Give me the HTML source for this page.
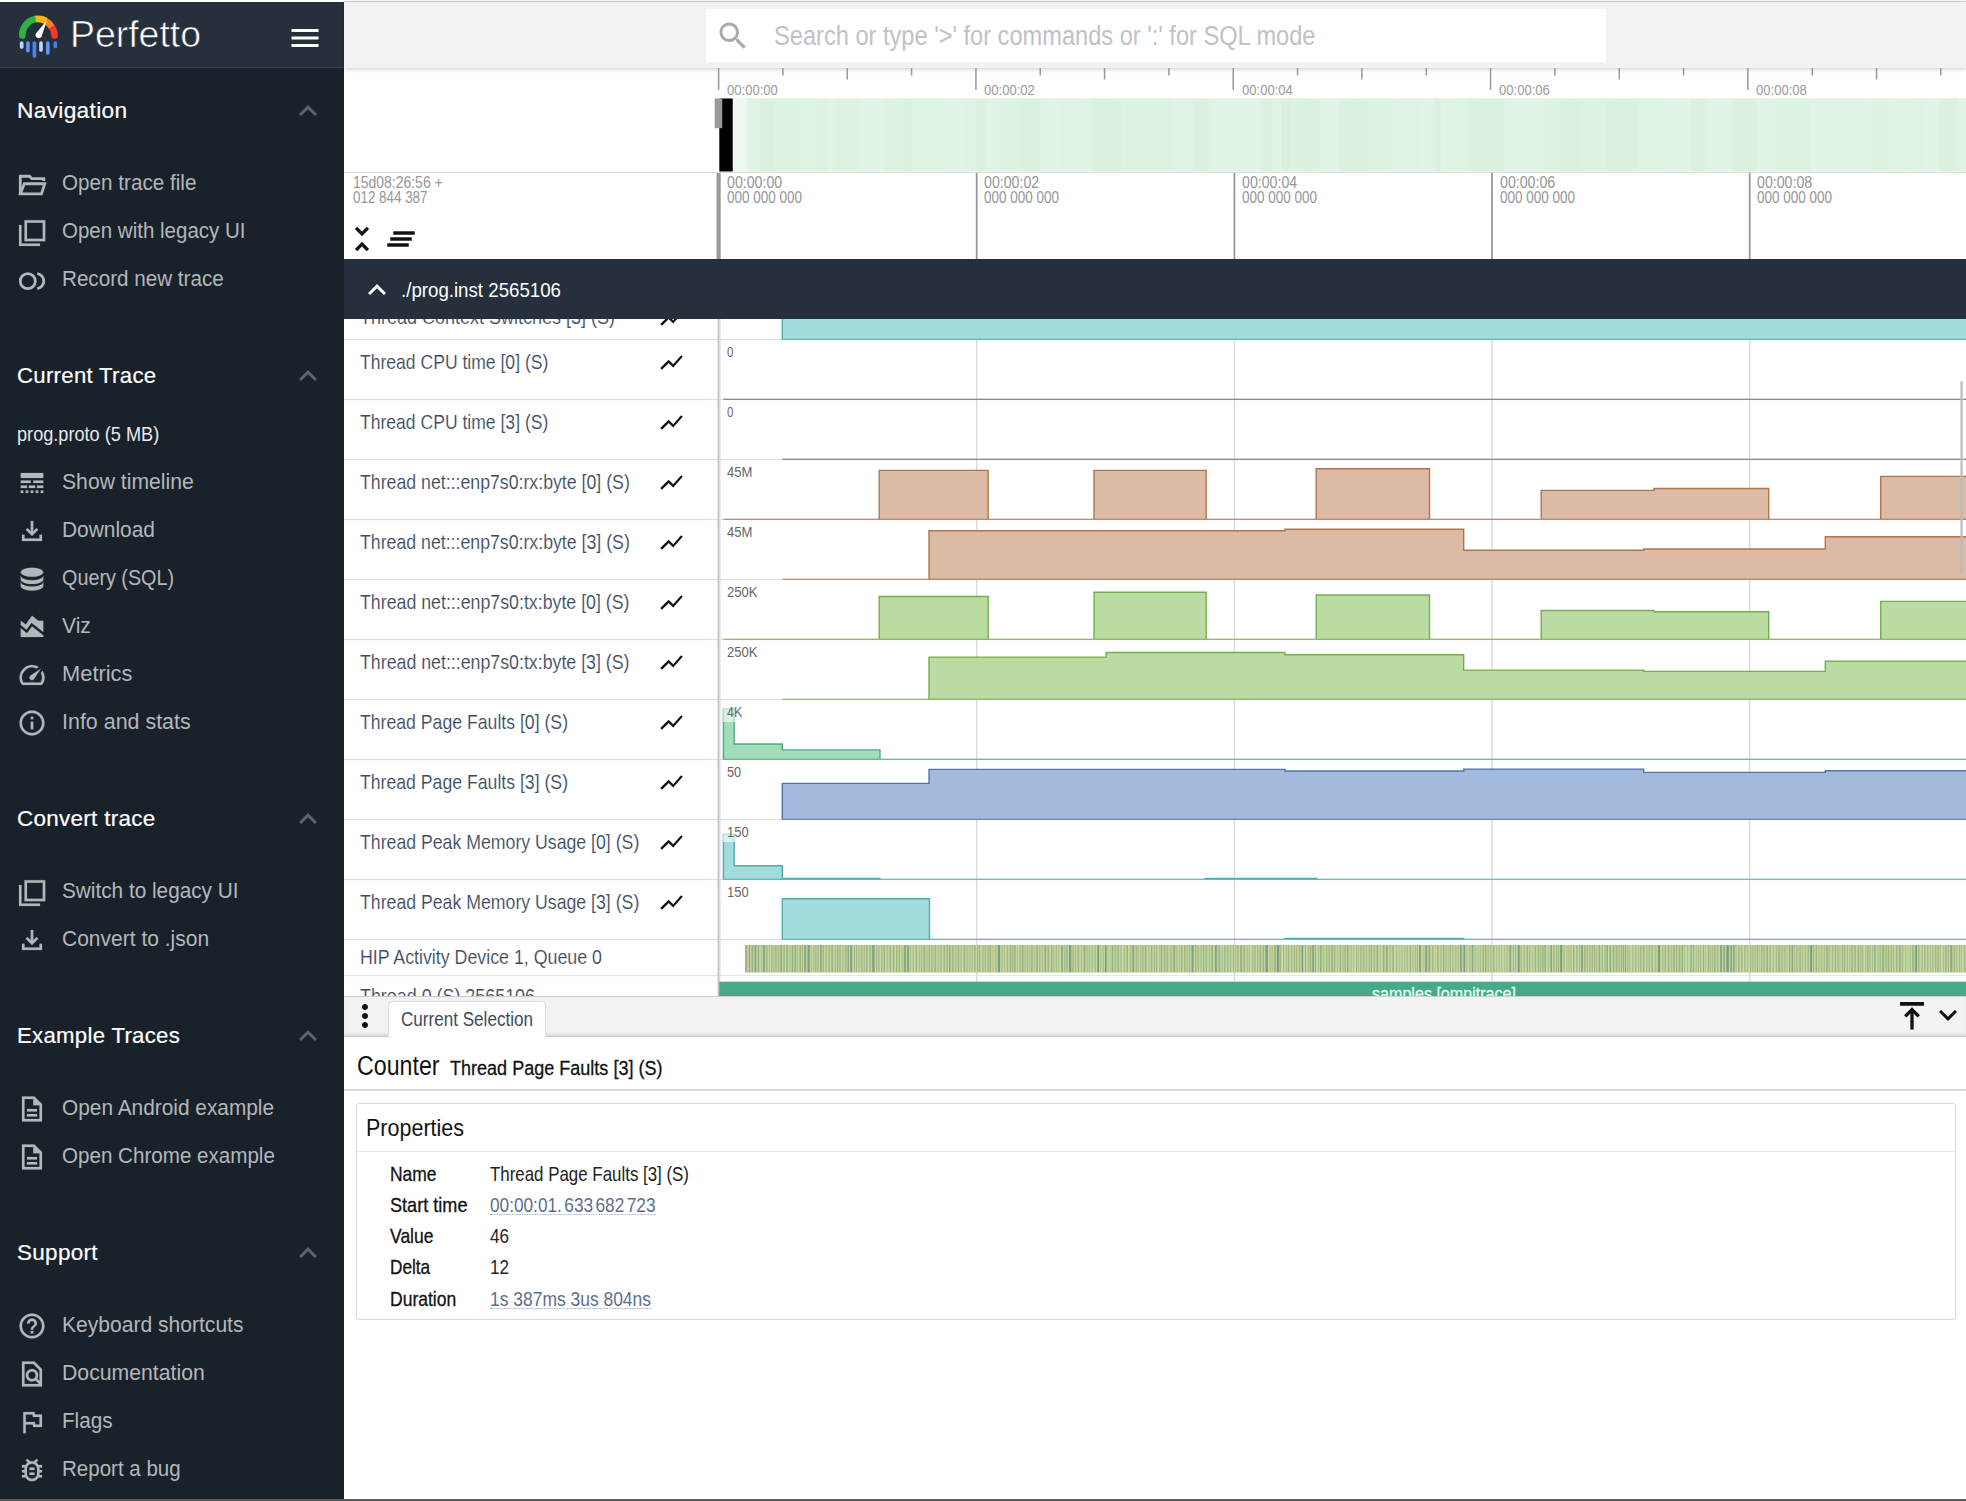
<!DOCTYPE html><html><head><meta charset="utf-8"><title>Perfetto UI</title><style>

html,body{margin:0;padding:0;background:#fff}
body{width:1966px;height:1501px;overflow:hidden;position:relative;font-family:"Liberation Sans",sans-serif}
.abs{position:absolute}
.t{position:absolute;white-space:nowrap;transform-origin:0 0;display:block}
.clip{position:absolute;overflow:hidden}

</style></head><body>
<div class="abs" style="left:0;top:0;width:1966px;height:2px;background:#fdfdfd"></div>
<div class="abs" style="left:0;top:2px;width:344px;height:1499px;background:#19212b"></div>
<div class="abs" style="left:0;top:2px;width:344px;height:65px;background:#262f3c"></div>
<div class="abs" style="left:0;top:67px;width:344px;height:1px;background:#3b4450"></div>
<svg class="abs" style="left:10px;top:8px" width="60" height="56" viewBox="10 8 60 56">
<g fill="none" stroke-width="6.6">
<path d="M22.3 35.5 A16.2 16.2 0 0 1 35.6 19.1" stroke="#2fb344" stroke-linecap="round"/>
<path d="M50.6 25.4 A16.2 16.2 0 0 1 54.7 35.5" stroke="#f0392b" stroke-linecap="round"/>
<path d="M44.8 20.4 A16.2 16.2 0 0 1 51.6 26.8" stroke="#f5821f"/>
<path d="M35.6 19.1 A16.2 16.2 0 0 1 46 20.9" stroke="#fbb514"/>
</g>
<path d="M46.9 20.3 L41.6 36.6 A3.3 3.3 0 0 1 35.6 34.1 Z" fill="#fff"/>
<g stroke-width="3.7" stroke-linecap="round">
<path d="M21.7 43v4" stroke="#bcd4fa"/>
<path d="M27.9 43v7.6" stroke="#5e97f1"/>
<path d="M34.4 43v13" stroke="#4285f4"/>
<path d="M41 43v7" stroke="#bcd4fa"/>
<path d="M47.8 43v10" stroke="#5e97f1"/>
<path d="M55.3 43v3.4" stroke="#3f7fe6"/>
</g></svg>
<span class="t" id="t0" style="left:69.6px;top:12.8px;font-size:36px;line-height:43.20px;color:#fff;-webkit-text-stroke:0.6px #262f3c;transform:scaleX(1.0390);">Perfetto</span>
<svg class="abs" style="left:286.5px;top:20.0px;color:#fff" width="36" height="36" viewBox="0 0 24 24" fill="#fff"><path d="M3 18h18v-2H3v2zm0-5h18v-2H3v2zm0-7v2h18V6H3z" /></svg>
<span class="t" id="t1" style="left:16.6px;top:97.2px;font-size:22.5px;line-height:27.00px;color:#fff;-webkit-text-stroke:0.2px #fff;transform:scaleX(1.0098);letter-spacing:0.3px;">Navigation</span>
<svg class="abs" style="left:290.0px;top:93.0px;color:#5e646b" width="36" height="36" viewBox="0 0 24 24" fill="#5e646b"><path d="M12 8l-6 6 1.41 1.41L12 10.83l4.59 4.58L18 14z" /></svg>
<svg class="abs" style="left:17.0px;top:168.9px;color:#b4b7ba" width="30" height="30" viewBox="0 0 24 24" fill="#b4b7ba" stroke="#b4b7ba" stroke-width="0.15"><path d="M21.4 9.6V7.7H11.9L10 5.8H2.64V19.9" fill="none" stroke="currentColor" stroke-width="2.25"/><path d="M2.64 19.9L5.9 11.8H22.2L19.6 19.9z" fill="none" stroke="currentColor" stroke-width="2.25"/></svg>
<span class="t" id="t2" style="left:61.8px;top:170.5px;font-size:21.5px;line-height:25.80px;color:#b4b7ba;transform:scaleX(0.9612);">Open trace file</span>
<svg class="abs" style="left:17.0px;top:216.9px;color:#b4b7ba" width="30" height="30" viewBox="0 0 24 24" fill="#b4b7ba" stroke="#b4b7ba" stroke-width="0.15"><path d="M1.6 6.3v16.8h16.8v-2H3.6V6.3zM6 2.5v16.8h16.6V2.5zm2 2h12.6v12.8H8z" fill-rule="evenodd"/></svg>
<span class="t" id="t3" style="left:61.8px;top:218.5px;font-size:21.5px;line-height:25.80px;color:#b4b7ba;transform:scaleX(0.9537);">Open with legacy UI</span>
<svg class="abs" style="left:17.0px;top:264.9px;color:#b4b7ba" width="30" height="30" viewBox="0 0 24 24" fill="#b4b7ba" stroke="#b4b7ba" stroke-width="0.15"><circle cx="8.64" cy="12.9" r="6" fill="none" stroke="currentColor" stroke-width="2.25"/><path d="M16.2 6.95A6 6 0 0 1 16.2 18.85" fill="none" stroke="currentColor" stroke-width="2.25"/></svg>
<span class="t" id="t4" style="left:61.8px;top:266.5px;font-size:21.5px;line-height:25.80px;color:#b4b7ba;transform:scaleX(0.9596);">Record new trace</span>
<span class="t" id="t5" style="left:16.6px;top:362.2px;font-size:22.5px;line-height:27.00px;color:#fff;-webkit-text-stroke:0.2px #fff;transform:scaleX(0.9855);letter-spacing:0.3px;">Current Trace</span>
<svg class="abs" style="left:290.0px;top:358.0px;color:#5e646b" width="36" height="36" viewBox="0 0 24 24" fill="#5e646b"><path d="M12 8l-6 6 1.41 1.41L12 10.83l4.59 4.58L18 14z" /></svg>
<span class="t" id="t6" style="left:17.4px;top:420.9px;font-size:21px;line-height:25.20px;color:#e8e9ea;transform:scaleX(0.8640);">prog.proto (5 MB)</span>
<svg class="abs" style="left:17.0px;top:467.9px;color:#b4b7ba" width="30" height="30" viewBox="0 0 24 24" fill="#b4b7ba" stroke="#b4b7ba" stroke-width="0.15"><path d="M3 16h5v-2H3v2zm6.5 0h5v-2h-5v2zm6.5 0h5v-2h-5v2zM3 20h2v-2H3v2zm4 0h2v-2H7v2zm4 0h2v-2h-2v2zm4 0h2v-2h-2v2zm4 0h2v-2h-2v2zM3 12h8v-2H3v2zm10 0h8v-2h-8v2zM3 4v4h18V4H3z" /></svg>
<span class="t" id="t7" style="left:61.8px;top:469.5px;font-size:21.5px;line-height:25.80px;color:#b4b7ba;transform:scaleX(0.9840);">Show timeline</span>
<svg class="abs" style="left:17.0px;top:515.9px;color:#b4b7ba" width="30" height="30" viewBox="0 0 24 24" fill="#b4b7ba" stroke="#b4b7ba" stroke-width="0.15"><path d="M18 15v3H6v-3H4v5h16v-5h-2zm-1-4-1.41-1.41L13 12.17V4h-2v8.17L8.41 9.59 7 11l5 5 5-5z" /></svg>
<span class="t" id="t8" style="left:61.8px;top:517.5px;font-size:21.5px;line-height:25.80px;color:#b4b7ba;transform:scaleX(0.9715);">Download</span>
<svg class="abs" style="left:17.0px;top:563.9px;color:#b4b7ba" width="30" height="30" viewBox="0 0 24 24" fill="#b4b7ba" stroke="#b4b7ba" stroke-width="0.15"><ellipse cx="12" cy="6.6" rx="9" ry="3.6"/><path d="M3 9.3c0 2 4 3.6 9 3.6s9-1.6 9-3.6v3.1c0 2-4 3.6-9 3.6s-9-1.6-9-3.6z" /><path d="M3 14.4c0 2 4 3.6 9 3.6s9-1.6 9-3.6v3.1c0 2-4 3.6-9 3.6s-9-1.6-9-3.6z" /></svg>
<span class="t" id="t9" style="left:61.8px;top:565.5px;font-size:21.5px;line-height:25.80px;color:#b4b7ba;transform:scaleX(0.9198);">Query (SQL)</span>
<svg class="abs" style="left:17.0px;top:611.9px;color:#b4b7ba" width="30" height="30" viewBox="0 0 24 24" fill="#b4b7ba" stroke="#b4b7ba" stroke-width="0.15"><path d="M3 13v7h18v-1.5l-9-7L8 17l-5-4zm0-6 4 3 5-7 5 4h4v8.97l-9.4-7.31-3.98 5.48L3 10.44V7z" /></svg>
<span class="t" id="t10" style="left:61.8px;top:613.5px;font-size:21.5px;line-height:25.80px;color:#b4b7ba;transform:scaleX(0.9802);">Viz</span>
<svg class="abs" style="left:17.0px;top:659.9px;color:#b4b7ba" width="30" height="30" viewBox="0 0 24 24" fill="#b4b7ba" stroke="#b4b7ba" stroke-width="0.15"><path d="M20.38 8.57l-1.23 1.85a8 8 0 0 1-.22 7.58H5.07A8 8 0 0 1 15.58 6.85l1.85-1.23A10 10 0 0 0 3.35 19a2 2 0 0 0 1.72 1h13.85a2 2 0 0 0 1.74-1 10 10 0 0 0-.27-10.44zm-9.79 6.84a2 2 0 0 0 2.83 0l5.66-8.49-8.49 5.66a2 2 0 0 0 0 2.83z" /></svg>
<span class="t" id="t11" style="left:61.8px;top:661.5px;font-size:21.5px;line-height:25.80px;color:#b4b7ba;transform:scaleX(1.0176);">Metrics</span>
<svg class="abs" style="left:17.0px;top:707.9px;color:#b4b7ba" width="30" height="30" viewBox="0 0 24 24" fill="#b4b7ba" stroke="#b4b7ba" stroke-width="0.15"><path d="M11 7h2v2h-2zm0 4h2v6h-2zm1-9C6.48 2 2 6.48 2 12s4.48 10 10 10 10-4.48 10-10S17.52 2 12 2zm0 18c-4.41 0-8-3.59-8-8s3.59-8 8-8 8 3.59 8 8-3.59 8-8 8z" /></svg>
<span class="t" id="t12" style="left:61.8px;top:709.5px;font-size:21.5px;line-height:25.80px;color:#b4b7ba;transform:scaleX(0.9969);">Info and stats</span>
<span class="t" id="t13" style="left:16.6px;top:804.7px;font-size:22.5px;line-height:27.00px;color:#fff;-webkit-text-stroke:0.2px #fff;transform:scaleX(0.9966);letter-spacing:0.3px;">Convert trace</span>
<svg class="abs" style="left:290.0px;top:800.5px;color:#5e646b" width="36" height="36" viewBox="0 0 24 24" fill="#5e646b"><path d="M12 8l-6 6 1.41 1.41L12 10.83l4.59 4.58L18 14z" /></svg>
<svg class="abs" style="left:17.0px;top:876.9px;color:#b4b7ba" width="30" height="30" viewBox="0 0 24 24" fill="#b4b7ba" stroke="#b4b7ba" stroke-width="0.15"><path d="M1.6 6.3v16.8h16.8v-2H3.6V6.3zM6 2.5v16.8h16.6V2.5zm2 2h12.6v12.8H8z" fill-rule="evenodd"/></svg>
<span class="t" id="t14" style="left:61.8px;top:878.5px;font-size:21.5px;line-height:25.80px;color:#b4b7ba;transform:scaleX(0.9654);">Switch to legacy UI</span>
<svg class="abs" style="left:17.0px;top:924.9px;color:#b4b7ba" width="30" height="30" viewBox="0 0 24 24" fill="#b4b7ba" stroke="#b4b7ba" stroke-width="0.15"><path d="M18 15v3H6v-3H4v5h16v-5h-2zm-1-4-1.41-1.41L13 12.17V4h-2v8.17L8.41 9.59 7 11l5 5 5-5z" /></svg>
<span class="t" id="t15" style="left:61.8px;top:926.5px;font-size:21.5px;line-height:25.80px;color:#b4b7ba;transform:scaleX(0.9769);">Convert to .json</span>
<span class="t" id="t16" style="left:16.6px;top:1021.7px;font-size:22.5px;line-height:27.00px;color:#fff;-webkit-text-stroke:0.2px #fff;transform:scaleX(0.9854);letter-spacing:0.3px;">Example Traces</span>
<svg class="abs" style="left:290.0px;top:1017.5px;color:#5e646b" width="36" height="36" viewBox="0 0 24 24" fill="#5e646b"><path d="M12 8l-6 6 1.41 1.41L12 10.83l4.59 4.58L18 14z" /></svg>
<svg class="abs" style="left:17.0px;top:1093.9px;color:#b4b7ba" width="30" height="30" viewBox="0 0 24 24" fill="#b4b7ba" stroke="#b4b7ba" stroke-width="0.15"><path d="M8 16h8v2H8zm0-4h8v2H8zm6-10H4v20h16V8l-6-6zm4 18H6V4h7v5h5v11z" /></svg>
<span class="t" id="t17" style="left:61.8px;top:1095.5px;font-size:21.5px;line-height:25.80px;color:#b4b7ba;transform:scaleX(0.9697);">Open Android example</span>
<svg class="abs" style="left:17.0px;top:1141.9px;color:#b4b7ba" width="30" height="30" viewBox="0 0 24 24" fill="#b4b7ba" stroke="#b4b7ba" stroke-width="0.15"><path d="M8 16h8v2H8zm0-4h8v2H8zm6-10H4v20h16V8l-6-6zm4 18H6V4h7v5h5v11z" /></svg>
<span class="t" id="t18" style="left:61.8px;top:1143.5px;font-size:21.5px;line-height:25.80px;color:#b4b7ba;transform:scaleX(0.9578);">Open Chrome example</span>
<span class="t" id="t19" style="left:16.6px;top:1239.2px;font-size:22.5px;line-height:27.00px;color:#fff;-webkit-text-stroke:0.2px #fff;transform:scaleX(0.9987);letter-spacing:0.3px;">Support</span>
<svg class="abs" style="left:290.0px;top:1235.0px;color:#5e646b" width="36" height="36" viewBox="0 0 24 24" fill="#5e646b"><path d="M12 8l-6 6 1.41 1.41L12 10.83l4.59 4.58L18 14z" /></svg>
<svg class="abs" style="left:17.0px;top:1310.9px;color:#b4b7ba" width="30" height="30" viewBox="0 0 24 24" fill="#b4b7ba" stroke="#b4b7ba" stroke-width="0.15"><path d="M11 18h2v-2h-2v2zm1-16C6.48 2 2 6.48 2 12s4.48 10 10 10 10-4.48 10-10S17.52 2 12 2zm0 18c-4.41 0-8-3.59-8-8s3.59-8 8-8 8 3.59 8 8-3.59 8-8 8zm0-14c-2.21 0-4 1.79-4 4h2c0-1.1.9-2 2-2s2 .9 2 2c0 2-3 1.75-3 5h2c0-2.25 3-2.5 3-5 0-2.21-1.79-4-4-4z" /></svg>
<span class="t" id="t20" style="left:61.8px;top:1312.5px;font-size:21.5px;line-height:25.80px;color:#b4b7ba;transform:scaleX(0.9798);">Keyboard shortcuts</span>
<svg class="abs" style="left:17.0px;top:1358.9px;color:#b4b7ba" width="30" height="30" viewBox="0 0 24 24" fill="#b4b7ba" stroke="#b4b7ba" stroke-width="0.15"><path d="M14 2H4v20h16V8l-6-6zM6 4h7l5 5v8.58l-1.84-1.84c1.28-1.94 1.07-4.57-.64-6.28C14.55 8.49 13.28 8 12 8c-1.28 0-2.55.49-3.53 1.46-1.95 1.95-1.95 5.11 0 7.05.97.97 2.25 1.46 3.53 1.46.96 0 1.92-.28 2.75-.83L17.6 20H6V4zm8.11 11.1c-.56.56-1.31.88-2.11.88s-1.55-.31-2.11-.88c-.56-.56-.88-1.31-.88-2.11s.31-1.55.88-2.11c.56-.57 1.31-.88 2.11-.88s1.55.31 2.11.88c.56.56.88 1.31.88 2.11s-.31 1.55-.88 2.11z" /></svg>
<span class="t" id="t21" style="left:61.8px;top:1360.5px;font-size:21.5px;line-height:25.80px;color:#b4b7ba;transform:scaleX(0.9874);">Documentation</span>
<svg class="abs" style="left:17.0px;top:1406.9px;color:#b4b7ba" width="30" height="30" viewBox="0 0 24 24" fill="#b4b7ba" stroke="#b4b7ba" stroke-width="0.15"><path d="M12.36 6l.4 2H18v6h-3.36l-.4-2H7V6h5.36M14 4H5v17h2v-7h5.6l.4 2h7V6h-5.6L14 4z" /></svg>
<span class="t" id="t22" style="left:61.8px;top:1408.5px;font-size:21.5px;line-height:25.80px;color:#b4b7ba;transform:scaleX(0.9605);">Flags</span>
<svg class="abs" style="left:17.0px;top:1454.9px;color:#b4b7ba" width="30" height="30" viewBox="0 0 24 24" fill="#b4b7ba" stroke="#b4b7ba" stroke-width="0.15"><path d="M20 8h-2.81c-.45-.78-1.07-1.45-1.82-1.96L17 4.41 15.59 3l-2.17 2.17C12.96 5.06 12.49 5 12 5s-.96.06-1.41.17L8.41 3 7 4.41l1.62 1.63C7.88 6.55 7.26 7.22 6.81 8H4v2h2.09c-.05.33-.09.66-.09 1v1H4v2h2v1c0 .34.04.67.09 1H4v2h2.81c1.04 1.79 2.97 3 5.19 3s4.15-1.21 5.19-3H20v-2h-2.09c.05-.33.09-.66.09-1v-1h2v-2h-2v-1c0-.34-.04-.67-.09-1H20V8zm-4 4v3c0 .22-.03.47-.07.7l-.1.65-.37.65c-.72 1.24-2.04 2-3.46 2s-2.74-.77-3.46-2l-.37-.64-.1-.65C8.03 15.48 8 15.23 8 15v-4c0-.23.03-.48.07-.7l.1-.65.37-.65c.3-.52.72-.97 1.21-1.31l.57-.39.74-.18c.31-.08.63-.12.94-.12.32 0 .63.04.95.12l.68.16.61.42c.5.34.91.78 1.21 1.31l.38.65.1.65c.04.22.07.47.07.69v1zm-6 2h4v2h-4zm0-4h4v2h-4z" /></svg>
<span class="t" id="t23" style="left:61.8px;top:1456.5px;font-size:21.5px;line-height:25.80px;color:#b4b7ba;transform:scaleX(0.9549);">Report a bug</span>
<div class="abs" style="left:344px;top:2px;width:1622px;height:66px;background:#f2f2f2;box-shadow:0 1px 4px rgba(0,0,0,0.22)"></div>
<div class="abs" style="left:344px;top:1.1px;width:1622px;height:1.2px;background:#c6c6c6"></div>
<div class="abs" style="left:706px;top:9px;width:900px;height:53px;background:#fff;border-radius:3px"></div>
<svg class="abs" style="left:714.5px;top:17.5px;color:#aaa" width="36" height="36" viewBox="0 0 24 24" fill="#aaa"><path d="M15.5 14h-.79l-.28-.27C15.41 12.59 16 11.11 16 9.5 16 5.91 13.09 3 9.5 3S3 5.91 3 9.5 5.91 16 9.5 16c1.61 0 3.09-.59 4.23-1.57l.27.28v.79l5 4.99L20.49 19l-4.99-5zm-6 0C7.01 14 5 11.99 5 9.5S7.01 5 9.5 5 14 7.01 14 9.5 11.99 14 9.5 14z" /></svg>
<span class="t" id="t24" style="left:774.0px;top:20.3px;font-size:27px;line-height:32.40px;color:#bfc2c5;transform:scaleX(0.8746);">Search or type '&gt;' for commands or ':' for SQL mode</span>
<svg class="abs" style="left:0;top:0" width="1966" height="100"><rect x="717.85" y="68" width="1.5" height="22" fill="#999"/><rect x="782.18" y="68" width="1.5" height="7.5" fill="#999"/><rect x="846.51" y="68" width="1.5" height="11.5" fill="#999"/><rect x="910.84" y="68" width="1.5" height="7.5" fill="#999"/><rect x="975.17" y="68" width="1.5" height="22" fill="#999"/><rect x="1039.50" y="68" width="1.5" height="7.5" fill="#999"/><rect x="1103.83" y="68" width="1.5" height="11.5" fill="#999"/><rect x="1168.16" y="68" width="1.5" height="7.5" fill="#999"/><rect x="1232.49" y="68" width="1.5" height="22" fill="#999"/><rect x="1296.82" y="68" width="1.5" height="7.5" fill="#999"/><rect x="1361.15" y="68" width="1.5" height="11.5" fill="#999"/><rect x="1425.48" y="68" width="1.5" height="7.5" fill="#999"/><rect x="1489.81" y="68" width="1.5" height="22" fill="#999"/><rect x="1554.14" y="68" width="1.5" height="7.5" fill="#999"/><rect x="1618.47" y="68" width="1.5" height="11.5" fill="#999"/><rect x="1682.80" y="68" width="1.5" height="7.5" fill="#999"/><rect x="1747.13" y="68" width="1.5" height="22" fill="#999"/><rect x="1811.46" y="68" width="1.5" height="7.5" fill="#999"/><rect x="1875.79" y="68" width="1.5" height="11.5" fill="#999"/><rect x="1940.12" y="68" width="1.5" height="7.5" fill="#999"/></svg>
<span class="t" id="t25" style="left:727.0px;top:80.9px;font-size:15px;line-height:18.00px;color:#999;transform:scaleX(0.8700);">00:00:00</span>
<span class="t" id="t26" style="left:984.3px;top:80.9px;font-size:15px;line-height:18.00px;color:#999;transform:scaleX(0.8700);">00:00:02</span>
<span class="t" id="t27" style="left:1241.6px;top:80.9px;font-size:15px;line-height:18.00px;color:#999;transform:scaleX(0.8700);">00:00:04</span>
<span class="t" id="t28" style="left:1498.9px;top:80.9px;font-size:15px;line-height:18.00px;color:#999;transform:scaleX(0.8700);">00:00:06</span>
<span class="t" id="t29" style="left:1756.2px;top:80.9px;font-size:15px;line-height:18.00px;color:#999;transform:scaleX(0.8700);">00:00:08</span>
<svg class="abs" style="left:0;top:0" width="1966" height="173"><rect x="733" y="98.5" width="1233" height="73" fill="#dff3e3"/><rect x="733" y="98.5" width="14.5" height="73" fill="#eef8ee"/><rect x="747.5" y="98.5" width="12.5" height="73" fill="#e0f3e4"/><rect x="759.5" y="98.5" width="15.5" height="73" fill="#dbf0df"/><rect x="774.5" y="98.5" width="6.5" height="73" fill="#ddf2e1"/><rect x="780.5" y="98.5" width="20.5" height="73" fill="#ddf2e1"/><rect x="800.5" y="98.5" width="12.5" height="73" fill="#dff3e3"/><rect x="812.5" y="98.5" width="6.5" height="73" fill="#dff3e3"/><rect x="818.5" y="98.5" width="9.5" height="73" fill="#ddf2e1"/><rect x="827.5" y="98.5" width="6.5" height="73" fill="#e2f4e5"/><rect x="833.5" y="98.5" width="15.5" height="73" fill="#ddf2e1"/><rect x="848.5" y="98.5" width="9.5" height="73" fill="#ddf2e1"/><rect x="857.5" y="98.5" width="20.5" height="73" fill="#e2f4e5"/><rect x="877.5" y="98.5" width="6.5" height="73" fill="#e1f4e5"/><rect x="883.5" y="98.5" width="20.5" height="73" fill="#ddf2e1"/><rect x="903.5" y="98.5" width="9.5" height="73" fill="#dbf0df"/><rect x="912.5" y="98.5" width="26.5" height="73" fill="#dff3e3"/><rect x="938.5" y="98.5" width="6.5" height="73" fill="#dff3e3"/><rect x="944.5" y="98.5" width="20.5" height="73" fill="#e2f4e5"/><rect x="964.5" y="98.5" width="6.5" height="73" fill="#e0f3e4"/><rect x="970.5" y="98.5" width="6.5" height="73" fill="#dff3e3"/><rect x="976.5" y="98.5" width="9.5" height="73" fill="#dcf1e0"/><rect x="985.5" y="98.5" width="15.5" height="73" fill="#e0f3e4"/><rect x="1000.5" y="98.5" width="20.5" height="73" fill="#ddf2e1"/><rect x="1020.5" y="98.5" width="20.5" height="73" fill="#dcf1e0"/><rect x="1040.5" y="98.5" width="20.5" height="73" fill="#e1f4e5"/><rect x="1060.5" y="98.5" width="26.5" height="73" fill="#e0f3e4"/><rect x="1086.5" y="98.5" width="6.5" height="73" fill="#dff3e3"/><rect x="1092.5" y="98.5" width="20.5" height="73" fill="#dbf0df"/><rect x="1112.5" y="98.5" width="9.5" height="73" fill="#dcf1e0"/><rect x="1121.5" y="98.5" width="6.5" height="73" fill="#dff3e3"/><rect x="1127.5" y="98.5" width="26.5" height="73" fill="#ddf2e1"/><rect x="1153.5" y="98.5" width="20.5" height="73" fill="#ddf2e1"/><rect x="1173.5" y="98.5" width="20.5" height="73" fill="#e0f3e4"/><rect x="1193.5" y="98.5" width="15.5" height="73" fill="#dbf0df"/><rect x="1208.5" y="98.5" width="20.5" height="73" fill="#e2f4e5"/><rect x="1228.5" y="98.5" width="12.5" height="73" fill="#e2f4e5"/><rect x="1240.5" y="98.5" width="20.5" height="73" fill="#e2f4e5"/><rect x="1260.5" y="98.5" width="12.5" height="73" fill="#dcf1e0"/><rect x="1272.5" y="98.5" width="9.5" height="73" fill="#e1f4e5"/><rect x="1281.5" y="98.5" width="9.5" height="73" fill="#dbf0df"/><rect x="1290.5" y="98.5" width="9.5" height="73" fill="#ddf2e1"/><rect x="1299.5" y="98.5" width="20.5" height="73" fill="#dcf1e0"/><rect x="1319.5" y="98.5" width="20.5" height="73" fill="#e2f4e5"/><rect x="1339.5" y="98.5" width="12.5" height="73" fill="#dbf0df"/><rect x="1351.5" y="98.5" width="15.5" height="73" fill="#dcf1e0"/><rect x="1366.5" y="98.5" width="20.5" height="73" fill="#ddf2e1"/><rect x="1386.5" y="98.5" width="6.5" height="73" fill="#dff3e3"/><rect x="1392.5" y="98.5" width="15.5" height="73" fill="#e0f3e4"/><rect x="1407.5" y="98.5" width="12.5" height="73" fill="#e0f3e4"/><rect x="1419.5" y="98.5" width="15.5" height="73" fill="#e2f4e5"/><rect x="1434.5" y="98.5" width="6.5" height="73" fill="#dbf0df"/><rect x="1440.5" y="98.5" width="6.5" height="73" fill="#e1f4e5"/><rect x="1446.5" y="98.5" width="20.5" height="73" fill="#dff3e3"/><rect x="1466.5" y="98.5" width="12.5" height="73" fill="#dcf1e0"/><rect x="1478.5" y="98.5" width="26.5" height="73" fill="#dcf1e0"/><rect x="1504.5" y="98.5" width="20.5" height="73" fill="#e2f4e5"/><rect x="1524.5" y="98.5" width="20.5" height="73" fill="#e1f4e5"/><rect x="1544.5" y="98.5" width="15.5" height="73" fill="#ddf2e1"/><rect x="1559.5" y="98.5" width="6.5" height="73" fill="#dcf1e0"/><rect x="1565.5" y="98.5" width="15.5" height="73" fill="#dbf0df"/><rect x="1580.5" y="98.5" width="26.5" height="73" fill="#ddf2e1"/><rect x="1606.5" y="98.5" width="6.5" height="73" fill="#dbf0df"/><rect x="1612.5" y="98.5" width="26.5" height="73" fill="#dcf1e0"/><rect x="1638.5" y="98.5" width="26.5" height="73" fill="#dff3e3"/><rect x="1664.5" y="98.5" width="26.5" height="73" fill="#e1f4e5"/><rect x="1690.5" y="98.5" width="15.5" height="73" fill="#dcf1e0"/><rect x="1705.5" y="98.5" width="26.5" height="73" fill="#e2f4e5"/><rect x="1731.5" y="98.5" width="26.5" height="73" fill="#dcf1e0"/><rect x="1757.5" y="98.5" width="6.5" height="73" fill="#e2f4e5"/><rect x="1763.5" y="98.5" width="12.5" height="73" fill="#e0f3e4"/><rect x="1775.5" y="98.5" width="20.5" height="73" fill="#ddf2e1"/><rect x="1795.5" y="98.5" width="15.5" height="73" fill="#ddf2e1"/><rect x="1810.5" y="98.5" width="9.5" height="73" fill="#e1f4e5"/><rect x="1819.5" y="98.5" width="12.5" height="73" fill="#e0f3e4"/><rect x="1831.5" y="98.5" width="26.5" height="73" fill="#e0f3e4"/><rect x="1857.5" y="98.5" width="15.5" height="73" fill="#e2f4e5"/><rect x="1872.5" y="98.5" width="15.5" height="73" fill="#ddf2e1"/><rect x="1887.5" y="98.5" width="9.5" height="73" fill="#e2f4e5"/><rect x="1896.5" y="98.5" width="15.5" height="73" fill="#dff3e3"/><rect x="1911.5" y="98.5" width="12.5" height="73" fill="#e0f3e4"/><rect x="1923.5" y="98.5" width="15.5" height="73" fill="#e1f4e5"/><rect x="1938.5" y="98.5" width="20.5" height="73" fill="#dcf1e0"/><rect x="1958.5" y="98.5" width="26.5" height="73" fill="#e2f4e5"/><rect x="719.3" y="98.5" width="13.4" height="73" fill="#000"/><rect x="714.7" y="98.5" width="7.5" height="29.7" fill="#999"/></svg>
<div class="abs" style="left:344px;top:171.6px;width:1622px;height:1.6px;background:#dcdcdc"></div>
<span class="t" id="t30" style="left:353.3px;top:173.9px;font-size:15.8px;line-height:18.96px;color:#969696;transform:scaleX(0.8840);">15d08:26:56 +</span>
<span class="t" id="t31" style="left:353.3px;top:189.0px;font-size:15.8px;line-height:18.96px;color:#969696;transform:scaleX(0.8479);">012 844 387</span>
<svg class="abs" style="left:344.3px;top:221.2px;color:#111" width="36" height="36" viewBox="0 0 24 24" fill="#111" stroke="#111" stroke-width="0.3"><path d="M7.41 18.59L8.83 20 12 16.83 15.17 20l1.41-1.41L12 14l-4.59 4.59zm9.18-13.18L15.17 4 12 7.17 8.83 4 7.41 5.41 12 10l4.59-4.59z" /></svg>
<svg class="abs" style="left:383.2px;top:221.2px;color:#111" width="36" height="36" viewBox="0 0 24 24" fill="#111" stroke="#111" stroke-width="0.3"><path d="M5 13h14v-2H5v2zm-2 4h14v-2H3v2zM7 7v2h14V7H7z" /></svg>
<svg class="abs" style="left:0;top:0" width="1966" height="259"><rect x="716.6" y="173" width="4.1" height="86" fill="#999"/><rect x="975.8" y="173" width="1.8" height="86" fill="#999"/><rect x="1233.5" y="173" width="1.8" height="86" fill="#999"/><rect x="1491.1" y="173" width="1.8" height="86" fill="#999"/><rect x="1748.8" y="173" width="1.8" height="86" fill="#999"/></svg>
<span class="t" id="t32" style="left:727.0px;top:173.9px;font-size:15.8px;line-height:18.96px;color:#969696;transform:scaleX(0.8976);">00:00:00</span>
<span class="t" id="t33" style="left:727.0px;top:189.0px;font-size:15.8px;line-height:18.96px;color:#969696;transform:scaleX(0.8536);">000 000 000</span>
<span class="t" id="t34" style="left:984.4px;top:173.9px;font-size:15.8px;line-height:18.96px;color:#969696;transform:scaleX(0.8976);">00:00:02</span>
<span class="t" id="t35" style="left:984.4px;top:189.0px;font-size:15.8px;line-height:18.96px;color:#969696;transform:scaleX(0.8536);">000 000 000</span>
<span class="t" id="t36" style="left:1242.1px;top:173.9px;font-size:15.8px;line-height:18.96px;color:#969696;transform:scaleX(0.8976);">00:00:04</span>
<span class="t" id="t37" style="left:1242.1px;top:189.0px;font-size:15.8px;line-height:18.96px;color:#969696;transform:scaleX(0.8536);">000 000 000</span>
<span class="t" id="t38" style="left:1499.7px;top:173.9px;font-size:15.8px;line-height:18.96px;color:#969696;transform:scaleX(0.8976);">00:00:06</span>
<span class="t" id="t39" style="left:1499.7px;top:189.0px;font-size:15.8px;line-height:18.96px;color:#969696;transform:scaleX(0.8536);">000 000 000</span>
<span class="t" id="t40" style="left:1757.4px;top:173.9px;font-size:15.8px;line-height:18.96px;color:#969696;transform:scaleX(0.8976);">00:00:08</span>
<span class="t" id="t41" style="left:1757.4px;top:189.0px;font-size:15.8px;line-height:18.96px;color:#969696;transform:scaleX(0.8536);">000 000 000</span>
<svg class="abs" style="left:0;top:0" width="1966" height="996" viewBox="0 0 1966 996"><rect x="344" y="338.9" width="1622" height="1.2" fill="#dedede"/><rect x="344" y="398.9" width="1622" height="1.2" fill="#dedede"/><rect x="344" y="458.9" width="1622" height="1.2" fill="#dedede"/><rect x="344" y="518.9" width="1622" height="1.2" fill="#dedede"/><rect x="344" y="578.9" width="1622" height="1.2" fill="#dedede"/><rect x="344" y="638.9" width="1622" height="1.2" fill="#dedede"/><rect x="344" y="698.9" width="1622" height="1.2" fill="#dedede"/><rect x="344" y="758.9" width="1622" height="1.2" fill="#dedede"/><rect x="344" y="818.9" width="1622" height="1.2" fill="#dedede"/><rect x="344" y="878.9" width="1622" height="1.2" fill="#dedede"/><rect x="344" y="938.9" width="1622" height="1.2" fill="#dedede"/><rect x="344" y="974.9" width="1622" height="1.2" fill="#e6e6e6"/><rect x="975.95" y="319" width="1.5" height="677" fill="#dcdce2"/><rect x="1233.65" y="319" width="1.5" height="677" fill="#dcdce2"/><rect x="1491.25" y="319" width="1.5" height="677" fill="#dcdce2"/><rect x="1748.95" y="319" width="1.5" height="677" fill="#dcdce2"/><clipPath id="c1"><rect x="719" y="290.0" width="1260" height="49.70"/></clipPath><path d="M782.3 339.5L782.3 339.5L782.3 300.0L1970 300.0L1970 339.5Z" fill="#a3dcdc" stroke="#3fa6a6" stroke-width="1.4" stroke-opacity="0.9" clip-path="url(#c1)"/><clipPath id="c2"><rect x="719" y="339.5" width="1260" height="60.20"/></clipPath><path d="M723.4 399.5L723.4 399.5L723.4 399.5L1970 399.5L1970 399.5Z" fill="#a3a3dc" stroke="#5f5d78" stroke-width="1.4" stroke-opacity="0.9" clip-path="url(#c2)"/><clipPath id="c3"><rect x="719" y="399.5" width="1260" height="60.20"/></clipPath><path d="M782.3 459.5L782.3 459.5L782.3 459.5L1970 459.5L1970 459.5Z" fill="#a3a3dc" stroke="#5f5d78" stroke-width="1.4" stroke-opacity="0.9" clip-path="url(#c3)"/><clipPath id="c4"><rect x="719" y="459.5" width="1260" height="60.20"/></clipPath><path d="M723.4 519.5L723.4 519.5L723.4 519.5L879.2 519.5L879.2 470.4L988.2 470.4L988.2 519.5L1094.0 519.5L1094.0 470.4L1206.2 470.4L1206.2 519.5L1316.2 519.5L1316.2 468.8L1429.5 468.8L1429.5 519.5L1541.2 519.5L1541.2 490.4L1654.1 490.4L1654.1 488.5L1768.7 488.5L1768.7 519.5L1880.7 519.5L1880.7 476.4L1970 476.4L1970 519.5Z" fill="#dcbaa3" stroke="#a66a3f" stroke-width="1.4" stroke-opacity="0.9" clip-path="url(#c4)"/><clipPath id="c5"><rect x="719" y="519.5" width="1260" height="60.20"/></clipPath><path d="M782.3 579.5L782.3 579.5L782.3 579.5L929.0 579.5L929.0 530.7L1285.0 530.7L1285.0 529.2L1463.7 529.2L1463.7 550.3L1643.7 550.3L1643.7 549.0L1825.3 549.0L1825.3 536.7L1970 536.7L1970 579.5Z" fill="#dcbaa3" stroke="#a66a3f" stroke-width="1.4" stroke-opacity="0.9" clip-path="url(#c5)"/><clipPath id="c6"><rect x="719" y="579.5" width="1260" height="60.20"/></clipPath><path d="M723.4 639.5L723.4 639.5L723.4 639.5L879.2 639.5L879.2 596.5L988.2 596.5L988.2 639.5L1094.0 639.5L1094.0 592.3L1206.2 592.3L1206.2 639.5L1316.2 639.5L1316.2 595.0L1429.5 595.0L1429.5 639.5L1541.2 639.5L1541.2 610.5L1654.1 610.5L1654.1 611.8L1768.7 611.8L1768.7 639.5L1880.7 639.5L1880.7 601.4L1970 601.4L1970 639.5Z" fill="#badca3" stroke="#6aa63f" stroke-width="1.4" stroke-opacity="0.9" clip-path="url(#c6)"/><clipPath id="c7"><rect x="719" y="639.5" width="1260" height="60.20"/></clipPath><path d="M782.3 699.5L782.3 699.5L782.3 699.5L929.0 699.5L929.0 657.1L1106.2 657.1L1106.2 652.5L1285.0 652.5L1285.0 654.8L1463.7 654.8L1463.7 670.1L1643.7 670.1L1643.7 671.4L1825.3 671.4L1825.3 661.3L1970 661.3L1970 699.5Z" fill="#badca3" stroke="#6aa63f" stroke-width="1.4" stroke-opacity="0.9" clip-path="url(#c7)"/><clipPath id="c8"><rect x="719" y="699.5" width="1260" height="60.20"/></clipPath><path d="M723.4 759.5L723.4 759.5L723.4 708.9L734.2 708.9L734.2 744.0L782.3 744.0L782.3 749.9L880.0 749.9L880.0 759.5L1970 759.5L1970 759.5Z" fill="#a3dcba" stroke="#3fa66a" stroke-width="1.4" stroke-opacity="0.9" clip-path="url(#c8)"/><clipPath id="c9"><rect x="719" y="759.5" width="1260" height="60.20"/></clipPath><path d="M782.3 819.5L782.3 819.5L782.3 783.4L929.0 783.4L929.0 769.4L1285.0 769.4L1285.0 771.0L1463.7 771.0L1463.7 769.1L1643.7 769.1L1643.7 772.4L1825.3 772.4L1825.3 770.7L1970 770.7L1970 819.5Z" fill="#a3badc" stroke="#3f6aa6" stroke-width="1.4" stroke-opacity="0.9" clip-path="url(#c9)"/><clipPath id="c10"><rect x="719" y="819.5" width="1260" height="60.20"/></clipPath><path d="M723.4 879.5L723.4 879.5L723.4 834.2L734.2 834.2L734.2 865.8L782.3 865.8L782.3 878.5L880.0 878.5L880.0 879.5L1205.0 879.5L1205.0 878.5L1317.0 878.5L1317.0 879.5L1970 879.5L1970 879.5Z" fill="#a3dcdc" stroke="#3fa6a6" stroke-width="1.4" stroke-opacity="0.9" clip-path="url(#c10)"/><clipPath id="c11"><rect x="719" y="879.5" width="1260" height="60.20"/></clipPath><path d="M782.3 939.5L782.3 939.5L782.3 898.7L929.5 898.7L929.5 939.5L1285.0 939.5L1285.0 938.5L1463.7 938.5L1463.7 939.5L1970 939.5L1970 939.5Z" fill="#a3dcdc" stroke="#3fa6a6" stroke-width="1.4" stroke-opacity="0.9" clip-path="url(#c11)"/><rect x="745" y="945" width="1221" height="27.3" fill="#b6c993"/><rect x="745" y="945" width="2.3" height="27.3" fill="#b9a598"/><rect x="747.3" y="945" width="1.6" height="27.3" fill="#c6d7a0"/><rect x="748.7" y="945" width="1.7" height="27.3" fill="#97ad7c"/><rect x="750.2" y="945" width="1.6" height="27.3" fill="#c6d7a0"/><rect x="751.6" y="945" width="1.7" height="27.3" fill="#97ad7c"/><rect x="753.1" y="945" width="1.7" height="27.3" fill="#bfd49f"/><rect x="754.6" y="945" width="2.0" height="27.3" fill="#86a182"/><rect x="756.4" y="945" width="1.6" height="27.3" fill="#c1d6a6"/><rect x="757.8" y="945" width="1.5" height="27.3" fill="#97ad7c"/><rect x="759.2" y="945" width="2.1" height="27.3" fill="#c1d6a6"/><rect x="761.0" y="945" width="1.6" height="27.3" fill="#b0c28c"/><rect x="762.4" y="945" width="1.1" height="27.3" fill="#c6d7a0"/><rect x="763.3" y="945" width="1.6" height="27.3" fill="#7d9a7e"/><rect x="764.8" y="945" width="1.7" height="27.3" fill="#bad1a0"/><rect x="766.3" y="945" width="1.5" height="27.3" fill="#9fb37b"/><rect x="767.6" y="945" width="1.6" height="27.3" fill="#c1d6a6"/><rect x="769.0" y="945" width="1.0" height="27.3" fill="#a7ba84"/><rect x="769.8" y="945" width="1.6" height="27.3" fill="#c9daa8"/><rect x="771.2" y="945" width="1.5" height="27.3" fill="#a0b584"/><rect x="772.5" y="945" width="1.2" height="27.3" fill="#c9daa8"/><rect x="773.5" y="945" width="1.2" height="27.3" fill="#a3b67f"/><rect x="774.5" y="945" width="1.1" height="27.3" fill="#c6d7a0"/><rect x="775.4" y="945" width="1.4" height="27.3" fill="#a0b584"/><rect x="776.6" y="945" width="1.4" height="27.3" fill="#c4d8a4"/><rect x="777.7" y="945" width="1.8" height="27.3" fill="#a7ba84"/><rect x="779.3" y="945" width="1.3" height="27.3" fill="#c4d8a4"/><rect x="780.4" y="945" width="1.9" height="27.3" fill="#97ad7c"/><rect x="782.1" y="945" width="1.5" height="27.3" fill="#c6d7a0"/><rect x="783.4" y="945" width="1.7" height="27.3" fill="#a3b67f"/><rect x="784.9" y="945" width="1.4" height="27.3" fill="#c9daa8"/><rect x="786.2" y="945" width="1.9" height="27.3" fill="#a0b584"/><rect x="787.8" y="945" width="2.0" height="27.3" fill="#bfd49f"/><rect x="789.6" y="945" width="1.1" height="27.3" fill="#a7ba84"/><rect x="790.5" y="945" width="1.6" height="27.3" fill="#bad1a0"/><rect x="791.9" y="945" width="1.5" height="27.3" fill="#97ad7c"/><rect x="793.2" y="945" width="1.6" height="27.3" fill="#c1d6a6"/><rect x="794.6" y="945" width="1.4" height="27.3" fill="#97ad7c"/><rect x="795.8" y="945" width="1.2" height="27.3" fill="#bad1a0"/><rect x="796.8" y="945" width="1.0" height="27.3" fill="#a0b584"/><rect x="797.6" y="945" width="2.1" height="27.3" fill="#c6d7a0"/><rect x="799.5" y="945" width="1.8" height="27.3" fill="#9fb37b"/><rect x="801.1" y="945" width="1.3" height="27.3" fill="#c6d7a0"/><rect x="802.2" y="945" width="1.1" height="27.3" fill="#9fb37b"/><rect x="803.1" y="945" width="1.3" height="27.3" fill="#c9daa8"/><rect x="804.2" y="945" width="2.3" height="27.3" fill="#8ea884"/><rect x="806.3" y="945" width="1.5" height="27.3" fill="#c4d8a4"/><rect x="807.6" y="945" width="2.3" height="27.3" fill="#7d9a7e"/><rect x="809.7" y="945" width="1.1" height="27.3" fill="#c9daa8"/><rect x="810.6" y="945" width="1.4" height="27.3" fill="#b0c28c"/><rect x="811.8" y="945" width="1.6" height="27.3" fill="#c6d7a0"/><rect x="813.2" y="945" width="1.3" height="27.3" fill="#abbd83"/><rect x="814.3" y="945" width="1.3" height="27.3" fill="#bfd49f"/><rect x="815.4" y="945" width="1.2" height="27.3" fill="#9fb37b"/><rect x="816.4" y="945" width="1.3" height="27.3" fill="#c1d6a6"/><rect x="817.5" y="945" width="1.2" height="27.3" fill="#97ad7c"/><rect x="818.5" y="945" width="2.0" height="27.3" fill="#c6d7a0"/><rect x="820.2" y="945" width="1.7" height="27.3" fill="#86a182"/><rect x="821.7" y="945" width="1.1" height="27.3" fill="#c9daa8"/><rect x="822.6" y="945" width="1.6" height="27.3" fill="#a3b67f"/><rect x="824.1" y="945" width="1.5" height="27.3" fill="#c6d7a0"/><rect x="825.4" y="945" width="1.5" height="27.3" fill="#abbd83"/><rect x="826.7" y="945" width="2.1" height="27.3" fill="#bfd49f"/><rect x="828.5" y="945" width="1.5" height="27.3" fill="#a0b584"/><rect x="829.8" y="945" width="1.7" height="27.3" fill="#c4d8a4"/><rect x="831.4" y="945" width="1.8" height="27.3" fill="#9fb37b"/><rect x="833.0" y="945" width="1.8" height="27.3" fill="#c4d8a4"/><rect x="834.6" y="945" width="1.4" height="27.3" fill="#a7ba84"/><rect x="835.8" y="945" width="1.1" height="27.3" fill="#c9daa8"/><rect x="836.8" y="945" width="1.5" height="27.3" fill="#9fb37b"/><rect x="838.1" y="945" width="1.2" height="27.3" fill="#bfd49f"/><rect x="839.1" y="945" width="1.9" height="27.3" fill="#abbd83"/><rect x="840.8" y="945" width="1.8" height="27.3" fill="#c6d7a0"/><rect x="842.4" y="945" width="1.1" height="27.3" fill="#a7ba84"/><rect x="843.3" y="945" width="2.0" height="27.3" fill="#bad1a0"/><rect x="845.1" y="945" width="1.6" height="27.3" fill="#a7ba84"/><rect x="846.6" y="945" width="1.1" height="27.3" fill="#c1d6a6"/><rect x="847.5" y="945" width="1.7" height="27.3" fill="#8ea884"/><rect x="849.0" y="945" width="1.4" height="27.3" fill="#c4d8a4"/><rect x="850.2" y="945" width="2.3" height="27.3" fill="#86a182"/><rect x="852.3" y="945" width="2.0" height="27.3" fill="#c1d6a6"/><rect x="854.1" y="945" width="1.1" height="27.3" fill="#a3b67f"/><rect x="855.0" y="945" width="1.5" height="27.3" fill="#c1d6a6"/><rect x="856.2" y="945" width="1.1" height="27.3" fill="#a0b584"/><rect x="857.1" y="945" width="1.5" height="27.3" fill="#c4d8a4"/><rect x="858.4" y="945" width="1.5" height="27.3" fill="#b0c28c"/><rect x="859.7" y="945" width="1.8" height="27.3" fill="#bad1a0"/><rect x="861.3" y="945" width="1.5" height="27.3" fill="#a7ba84"/><rect x="862.6" y="945" width="1.2" height="27.3" fill="#c4d8a4"/><rect x="863.6" y="945" width="1.8" height="27.3" fill="#abbd83"/><rect x="865.2" y="945" width="1.4" height="27.3" fill="#c1d6a6"/><rect x="866.4" y="945" width="1.4" height="27.3" fill="#97ad7c"/><rect x="867.7" y="945" width="1.9" height="27.3" fill="#c4d8a4"/><rect x="869.4" y="945" width="1.5" height="27.3" fill="#a3b67f"/><rect x="870.7" y="945" width="1.7" height="27.3" fill="#bad1a0"/><rect x="872.2" y="945" width="2.7" height="27.3" fill="#86a182"/><rect x="874.7" y="945" width="1.6" height="27.3" fill="#c6d7a0"/><rect x="876.1" y="945" width="1.4" height="27.3" fill="#a7ba84"/><rect x="877.3" y="945" width="1.5" height="27.3" fill="#bfd49f"/><rect x="878.6" y="945" width="1.2" height="27.3" fill="#9fb37b"/><rect x="879.6" y="945" width="1.9" height="27.3" fill="#c9daa8"/><rect x="881.3" y="945" width="1.4" height="27.3" fill="#9fb37b"/><rect x="882.4" y="945" width="1.4" height="27.3" fill="#c1d6a6"/><rect x="883.7" y="945" width="1.6" height="27.3" fill="#a0b584"/><rect x="885.0" y="945" width="1.9" height="27.3" fill="#bfd49f"/><rect x="886.8" y="945" width="1.3" height="27.3" fill="#b0c28c"/><rect x="887.9" y="945" width="2.0" height="27.3" fill="#bfd49f"/><rect x="889.7" y="945" width="1.4" height="27.3" fill="#a0b584"/><rect x="891.0" y="945" width="2.0" height="27.3" fill="#c4d8a4"/><rect x="892.8" y="945" width="1.9" height="27.3" fill="#a3b67f"/><rect x="894.4" y="945" width="1.9" height="27.3" fill="#c4d8a4"/><rect x="896.1" y="945" width="1.2" height="27.3" fill="#9fb37b"/><rect x="897.2" y="945" width="1.9" height="27.3" fill="#bad1a0"/><rect x="898.9" y="945" width="1.4" height="27.3" fill="#a3b67f"/><rect x="900.2" y="945" width="1.8" height="27.3" fill="#c6d7a0"/><rect x="901.8" y="945" width="1.1" height="27.3" fill="#a7ba84"/><rect x="902.6" y="945" width="1.4" height="27.3" fill="#c6d7a0"/><rect x="903.8" y="945" width="2.5" height="27.3" fill="#8ea884"/><rect x="906.1" y="945" width="1.4" height="27.3" fill="#c6d7a0"/><rect x="907.3" y="945" width="1.8" height="27.3" fill="#789878"/><rect x="908.8" y="945" width="1.3" height="27.3" fill="#c9daa8"/><rect x="909.9" y="945" width="1.1" height="27.3" fill="#a7ba84"/><rect x="910.9" y="945" width="2.1" height="27.3" fill="#c4d8a4"/><rect x="912.7" y="945" width="1.6" height="27.3" fill="#abbd83"/><rect x="914.1" y="945" width="1.7" height="27.3" fill="#c9daa8"/><rect x="915.7" y="945" width="1.6" height="27.3" fill="#9fb37b"/><rect x="917.1" y="945" width="1.9" height="27.3" fill="#c9daa8"/><rect x="918.8" y="945" width="1.0" height="27.3" fill="#97ad7c"/><rect x="919.6" y="945" width="1.6" height="27.3" fill="#c4d8a4"/><rect x="921.0" y="945" width="1.2" height="27.3" fill="#a3b67f"/><rect x="922.1" y="945" width="1.6" height="27.3" fill="#c6d7a0"/><rect x="923.5" y="945" width="1.9" height="27.3" fill="#9fb37b"/><rect x="925.2" y="945" width="1.5" height="27.3" fill="#c1d6a6"/><rect x="926.5" y="945" width="1.1" height="27.3" fill="#abbd83"/><rect x="927.4" y="945" width="1.5" height="27.3" fill="#bad1a0"/><rect x="928.7" y="945" width="1.6" height="27.3" fill="#a7ba84"/><rect x="930.0" y="945" width="1.5" height="27.3" fill="#c6d7a0"/><rect x="931.3" y="945" width="1.5" height="27.3" fill="#a0b584"/><rect x="932.6" y="945" width="2.0" height="27.3" fill="#bad1a0"/><rect x="934.4" y="945" width="1.9" height="27.3" fill="#a7ba84"/><rect x="936.1" y="945" width="1.8" height="27.3" fill="#c1d6a6"/><rect x="937.7" y="945" width="1.1" height="27.3" fill="#9fb37b"/><rect x="938.6" y="945" width="2.0" height="27.3" fill="#c4d8a4"/><rect x="940.4" y="945" width="1.5" height="27.3" fill="#a0b584"/><rect x="941.7" y="945" width="2.0" height="27.3" fill="#c9daa8"/><rect x="943.5" y="945" width="1.8" height="27.3" fill="#a3b67f"/><rect x="945.1" y="945" width="1.6" height="27.3" fill="#c4d8a4"/><rect x="946.5" y="945" width="1.5" height="27.3" fill="#a0b584"/><rect x="947.8" y="945" width="1.4" height="27.3" fill="#c4d8a4"/><rect x="949.0" y="945" width="1.8" height="27.3" fill="#97ad7c"/><rect x="950.6" y="945" width="1.9" height="27.3" fill="#bfd49f"/><rect x="952.3" y="945" width="1.6" height="27.3" fill="#9fb37b"/><rect x="953.7" y="945" width="1.6" height="27.3" fill="#c6d7a0"/><rect x="955.1" y="945" width="1.5" height="27.3" fill="#abbd83"/><rect x="956.3" y="945" width="1.8" height="27.3" fill="#bad1a0"/><rect x="957.9" y="945" width="1.6" height="27.3" fill="#a0b584"/><rect x="959.3" y="945" width="1.3" height="27.3" fill="#c6d7a0"/><rect x="960.5" y="945" width="1.7" height="27.3" fill="#b0c28c"/><rect x="962.0" y="945" width="1.7" height="27.3" fill="#c6d7a0"/><rect x="963.5" y="945" width="1.8" height="27.3" fill="#a3b67f"/><rect x="965.2" y="945" width="1.4" height="27.3" fill="#bad1a0"/><rect x="966.4" y="945" width="1.8" height="27.3" fill="#b0c28c"/><rect x="968.0" y="945" width="1.3" height="27.3" fill="#bfd49f"/><rect x="969.1" y="945" width="1.5" height="27.3" fill="#b0c28c"/><rect x="970.3" y="945" width="1.6" height="27.3" fill="#bad1a0"/><rect x="971.7" y="945" width="1.5" height="27.3" fill="#b0c28c"/><rect x="973.0" y="945" width="1.5" height="27.3" fill="#c6d7a0"/><rect x="974.3" y="945" width="1.5" height="27.3" fill="#97ad7c"/><rect x="975.5" y="945" width="1.6" height="27.3" fill="#c6d7a0"/><rect x="977.0" y="945" width="1.1" height="27.3" fill="#9fb37b"/><rect x="977.9" y="945" width="1.2" height="27.3" fill="#c6d7a0"/><rect x="978.8" y="945" width="1.8" height="27.3" fill="#a0b584"/><rect x="980.5" y="945" width="2.0" height="27.3" fill="#c9daa8"/><rect x="982.3" y="945" width="1.4" height="27.3" fill="#a3b67f"/><rect x="983.5" y="945" width="1.5" height="27.3" fill="#bad1a0"/><rect x="984.9" y="945" width="1.1" height="27.3" fill="#97ad7c"/><rect x="985.8" y="945" width="1.7" height="27.3" fill="#c9daa8"/><rect x="987.3" y="945" width="1.7" height="27.3" fill="#a7ba84"/><rect x="988.8" y="945" width="1.1" height="27.3" fill="#bfd49f"/><rect x="989.7" y="945" width="1.6" height="27.3" fill="#a3b67f"/><rect x="991.1" y="945" width="1.8" height="27.3" fill="#bfd49f"/><rect x="992.7" y="945" width="1.1" height="27.3" fill="#abbd83"/><rect x="993.6" y="945" width="1.7" height="27.3" fill="#c6d7a0"/><rect x="995.1" y="945" width="1.6" height="27.3" fill="#abbd83"/><rect x="996.6" y="945" width="1.6" height="27.3" fill="#bad1a0"/><rect x="998.0" y="945" width="2.4" height="27.3" fill="#7d9a7e"/><rect x="1000.2" y="945" width="1.6" height="27.3" fill="#c1d6a6"/><rect x="1001.6" y="945" width="1.2" height="27.3" fill="#9fb37b"/><rect x="1002.6" y="945" width="2.0" height="27.3" fill="#c6d7a0"/><rect x="1004.3" y="945" width="1.1" height="27.3" fill="#abbd83"/><rect x="1005.3" y="945" width="1.7" height="27.3" fill="#c9daa8"/><rect x="1006.8" y="945" width="1.3" height="27.3" fill="#a3b67f"/><rect x="1007.9" y="945" width="2.0" height="27.3" fill="#bfd49f"/><rect x="1009.7" y="945" width="1.9" height="27.3" fill="#a7ba84"/><rect x="1011.4" y="945" width="1.2" height="27.3" fill="#bfd49f"/><rect x="1012.4" y="945" width="1.1" height="27.3" fill="#97ad7c"/><rect x="1013.3" y="945" width="1.2" height="27.3" fill="#bad1a0"/><rect x="1014.3" y="945" width="1.6" height="27.3" fill="#9fb37b"/><rect x="1015.7" y="945" width="1.5" height="27.3" fill="#c1d6a6"/><rect x="1017.0" y="945" width="1.1" height="27.3" fill="#b0c28c"/><rect x="1017.9" y="945" width="1.8" height="27.3" fill="#c9daa8"/><rect x="1019.5" y="945" width="1.5" height="27.3" fill="#a0b584"/><rect x="1020.7" y="945" width="1.4" height="27.3" fill="#c1d6a6"/><rect x="1022.0" y="945" width="1.7" height="27.3" fill="#97ad7c"/><rect x="1023.5" y="945" width="1.2" height="27.3" fill="#c4d8a4"/><rect x="1024.5" y="945" width="1.6" height="27.3" fill="#b0c28c"/><rect x="1025.9" y="945" width="1.6" height="27.3" fill="#bfd49f"/><rect x="1027.2" y="945" width="1.2" height="27.3" fill="#a0b584"/><rect x="1028.2" y="945" width="1.3" height="27.3" fill="#c9daa8"/><rect x="1029.3" y="945" width="1.1" height="27.3" fill="#a7ba84"/><rect x="1030.2" y="945" width="1.2" height="27.3" fill="#c1d6a6"/><rect x="1031.2" y="945" width="1.7" height="27.3" fill="#a3b67f"/><rect x="1032.7" y="945" width="1.5" height="27.3" fill="#bad1a0"/><rect x="1034.0" y="945" width="1.4" height="27.3" fill="#b0c28c"/><rect x="1035.2" y="945" width="1.5" height="27.3" fill="#c1d6a6"/><rect x="1036.4" y="945" width="1.8" height="27.3" fill="#9fb37b"/><rect x="1038.0" y="945" width="1.5" height="27.3" fill="#c9daa8"/><rect x="1039.3" y="945" width="1.4" height="27.3" fill="#9fb37b"/><rect x="1040.5" y="945" width="1.7" height="27.3" fill="#c4d8a4"/><rect x="1042.0" y="945" width="1.0" height="27.3" fill="#a7ba84"/><rect x="1042.8" y="945" width="1.9" height="27.3" fill="#c1d6a6"/><rect x="1044.5" y="945" width="1.8" height="27.3" fill="#97ad7c"/><rect x="1046.1" y="945" width="1.7" height="27.3" fill="#bfd49f"/><rect x="1047.6" y="945" width="1.9" height="27.3" fill="#a0b584"/><rect x="1049.3" y="945" width="1.9" height="27.3" fill="#c9daa8"/><rect x="1050.9" y="945" width="1.7" height="27.3" fill="#a0b584"/><rect x="1052.4" y="945" width="1.3" height="27.3" fill="#bad1a0"/><rect x="1053.5" y="945" width="1.3" height="27.3" fill="#b0c28c"/><rect x="1054.6" y="945" width="1.8" height="27.3" fill="#bad1a0"/><rect x="1056.2" y="945" width="1.4" height="27.3" fill="#abbd83"/><rect x="1057.3" y="945" width="1.3" height="27.3" fill="#c9daa8"/><rect x="1058.4" y="945" width="1.1" height="27.3" fill="#a3b67f"/><rect x="1059.3" y="945" width="2.1" height="27.3" fill="#c6d7a0"/><rect x="1061.2" y="945" width="1.9" height="27.3" fill="#8ea884"/><rect x="1062.9" y="945" width="1.4" height="27.3" fill="#c1d6a6"/><rect x="1064.2" y="945" width="1.2" height="27.3" fill="#a7ba84"/><rect x="1065.1" y="945" width="1.5" height="27.3" fill="#bad1a0"/><rect x="1066.4" y="945" width="1.6" height="27.3" fill="#a0b584"/><rect x="1067.8" y="945" width="1.5" height="27.3" fill="#c6d7a0"/><rect x="1069.1" y="945" width="2.3" height="27.3" fill="#7d9a7e"/><rect x="1071.3" y="945" width="1.4" height="27.3" fill="#bad1a0"/><rect x="1072.4" y="945" width="1.7" height="27.3" fill="#abbd83"/><rect x="1073.9" y="945" width="1.5" height="27.3" fill="#c4d8a4"/><rect x="1075.2" y="945" width="1.2" height="27.3" fill="#a3b67f"/><rect x="1076.2" y="945" width="1.7" height="27.3" fill="#c6d7a0"/><rect x="1077.7" y="945" width="1.5" height="27.3" fill="#a0b584"/><rect x="1079.0" y="945" width="2.1" height="27.3" fill="#c1d6a6"/><rect x="1080.9" y="945" width="1.6" height="27.3" fill="#b0c28c"/><rect x="1082.2" y="945" width="1.7" height="27.3" fill="#c4d8a4"/><rect x="1083.7" y="945" width="1.8" height="27.3" fill="#97ad7c"/><rect x="1085.4" y="945" width="1.6" height="27.3" fill="#bfd49f"/><rect x="1086.7" y="945" width="1.5" height="27.3" fill="#b0c28c"/><rect x="1088.0" y="945" width="1.2" height="27.3" fill="#bad1a0"/><rect x="1089.0" y="945" width="1.5" height="27.3" fill="#b0c28c"/><rect x="1090.3" y="945" width="1.4" height="27.3" fill="#c6d7a0"/><rect x="1091.5" y="945" width="1.6" height="27.3" fill="#b0c28c"/><rect x="1092.9" y="945" width="2.0" height="27.3" fill="#c1d6a6"/><rect x="1094.7" y="945" width="1.3" height="27.3" fill="#a7ba84"/><rect x="1095.8" y="945" width="1.9" height="27.3" fill="#c6d7a0"/><rect x="1097.4" y="945" width="1.8" height="27.3" fill="#789878"/><rect x="1099.0" y="945" width="1.2" height="27.3" fill="#c9daa8"/><rect x="1100.0" y="945" width="1.0" height="27.3" fill="#abbd83"/><rect x="1100.8" y="945" width="2.0" height="27.3" fill="#c4d8a4"/><rect x="1102.7" y="945" width="1.2" height="27.3" fill="#abbd83"/><rect x="1103.7" y="945" width="1.6" height="27.3" fill="#bfd49f"/><rect x="1105.0" y="945" width="1.7" height="27.3" fill="#789878"/><rect x="1106.6" y="945" width="1.2" height="27.3" fill="#bfd49f"/><rect x="1107.6" y="945" width="1.1" height="27.3" fill="#b0c28c"/><rect x="1108.5" y="945" width="1.5" height="27.3" fill="#c4d8a4"/><rect x="1109.8" y="945" width="1.0" height="27.3" fill="#b0c28c"/><rect x="1110.7" y="945" width="1.3" height="27.3" fill="#c9daa8"/><rect x="1111.7" y="945" width="1.6" height="27.3" fill="#97ad7c"/><rect x="1113.1" y="945" width="1.7" height="27.3" fill="#c1d6a6"/><rect x="1114.6" y="945" width="1.4" height="27.3" fill="#a0b584"/><rect x="1115.8" y="945" width="1.8" height="27.3" fill="#bfd49f"/><rect x="1117.5" y="945" width="1.7" height="27.3" fill="#9fb37b"/><rect x="1118.9" y="945" width="1.6" height="27.3" fill="#c6d7a0"/><rect x="1120.3" y="945" width="1.7" height="27.3" fill="#b0c28c"/><rect x="1121.8" y="945" width="1.9" height="27.3" fill="#c9daa8"/><rect x="1123.6" y="945" width="1.6" height="27.3" fill="#b0c28c"/><rect x="1125.0" y="945" width="1.8" height="27.3" fill="#bfd49f"/><rect x="1126.6" y="945" width="1.7" height="27.3" fill="#9fb37b"/><rect x="1128.0" y="945" width="2.1" height="27.3" fill="#c6d7a0"/><rect x="1129.9" y="945" width="1.8" height="27.3" fill="#abbd83"/><rect x="1131.5" y="945" width="1.1" height="27.3" fill="#c4d8a4"/><rect x="1132.5" y="945" width="1.9" height="27.3" fill="#86a182"/><rect x="1134.2" y="945" width="1.7" height="27.3" fill="#c4d8a4"/><rect x="1135.7" y="945" width="1.3" height="27.3" fill="#a0b584"/><rect x="1136.7" y="945" width="1.2" height="27.3" fill="#c1d6a6"/><rect x="1137.7" y="945" width="1.2" height="27.3" fill="#a3b67f"/><rect x="1138.7" y="945" width="1.6" height="27.3" fill="#c9daa8"/><rect x="1140.1" y="945" width="1.3" height="27.3" fill="#abbd83"/><rect x="1141.2" y="945" width="1.2" height="27.3" fill="#c4d8a4"/><rect x="1142.3" y="945" width="1.4" height="27.3" fill="#a0b584"/><rect x="1143.5" y="945" width="1.7" height="27.3" fill="#bfd49f"/><rect x="1145.0" y="945" width="1.7" height="27.3" fill="#97ad7c"/><rect x="1146.5" y="945" width="1.9" height="27.3" fill="#c9daa8"/><rect x="1148.2" y="945" width="1.8" height="27.3" fill="#b0c28c"/><rect x="1149.7" y="945" width="1.4" height="27.3" fill="#c6d7a0"/><rect x="1151.0" y="945" width="1.7" height="27.3" fill="#9fb37b"/><rect x="1152.5" y="945" width="1.5" height="27.3" fill="#c9daa8"/><rect x="1153.8" y="945" width="1.4" height="27.3" fill="#a3b67f"/><rect x="1155.0" y="945" width="1.2" height="27.3" fill="#c4d8a4"/><rect x="1156.0" y="945" width="1.5" height="27.3" fill="#a0b584"/><rect x="1157.3" y="945" width="1.8" height="27.3" fill="#c9daa8"/><rect x="1158.9" y="945" width="1.0" height="27.3" fill="#a3b67f"/><rect x="1159.7" y="945" width="1.3" height="27.3" fill="#c1d6a6"/><rect x="1160.8" y="945" width="1.6" height="27.3" fill="#97ad7c"/><rect x="1162.3" y="945" width="1.8" height="27.3" fill="#c1d6a6"/><rect x="1163.9" y="945" width="1.8" height="27.3" fill="#9fb37b"/><rect x="1165.5" y="945" width="1.5" height="27.3" fill="#c1d6a6"/><rect x="1166.7" y="945" width="1.8" height="27.3" fill="#a3b67f"/><rect x="1168.4" y="945" width="1.8" height="27.3" fill="#c6d7a0"/><rect x="1170.0" y="945" width="1.8" height="27.3" fill="#abbd83"/><rect x="1171.6" y="945" width="2.0" height="27.3" fill="#bad1a0"/><rect x="1173.4" y="945" width="1.9" height="27.3" fill="#97ad7c"/><rect x="1175.1" y="945" width="1.4" height="27.3" fill="#bad1a0"/><rect x="1176.3" y="945" width="1.7" height="27.3" fill="#b0c28c"/><rect x="1177.8" y="945" width="1.3" height="27.3" fill="#c9daa8"/><rect x="1178.9" y="945" width="1.0" height="27.3" fill="#abbd83"/><rect x="1179.7" y="945" width="1.5" height="27.3" fill="#bad1a0"/><rect x="1181.0" y="945" width="1.7" height="27.3" fill="#a3b67f"/><rect x="1182.5" y="945" width="1.9" height="27.3" fill="#c6d7a0"/><rect x="1184.2" y="945" width="1.5" height="27.3" fill="#9fb37b"/><rect x="1185.5" y="945" width="1.3" height="27.3" fill="#bad1a0"/><rect x="1186.6" y="945" width="1.3" height="27.3" fill="#a7ba84"/><rect x="1187.6" y="945" width="1.3" height="27.3" fill="#c4d8a4"/><rect x="1188.8" y="945" width="1.5" height="27.3" fill="#a7ba84"/><rect x="1190.1" y="945" width="1.8" height="27.3" fill="#bad1a0"/><rect x="1191.6" y="945" width="2.3" height="27.3" fill="#86a182"/><rect x="1193.7" y="945" width="1.4" height="27.3" fill="#c9daa8"/><rect x="1194.9" y="945" width="1.8" height="27.3" fill="#a7ba84"/><rect x="1196.5" y="945" width="1.1" height="27.3" fill="#c1d6a6"/><rect x="1197.5" y="945" width="1.7" height="27.3" fill="#abbd83"/><rect x="1198.9" y="945" width="1.5" height="27.3" fill="#c1d6a6"/><rect x="1200.3" y="945" width="1.7" height="27.3" fill="#b0c28c"/><rect x="1201.7" y="945" width="1.4" height="27.3" fill="#bad1a0"/><rect x="1203.0" y="945" width="1.3" height="27.3" fill="#a3b67f"/><rect x="1204.1" y="945" width="1.8" height="27.3" fill="#bad1a0"/><rect x="1205.7" y="945" width="1.7" height="27.3" fill="#a7ba84"/><rect x="1207.2" y="945" width="1.8" height="27.3" fill="#c4d8a4"/><rect x="1208.8" y="945" width="1.7" height="27.3" fill="#abbd83"/><rect x="1210.3" y="945" width="1.4" height="27.3" fill="#c4d8a4"/><rect x="1211.6" y="945" width="1.8" height="27.3" fill="#97ad7c"/><rect x="1213.1" y="945" width="2.1" height="27.3" fill="#c1d6a6"/><rect x="1215.0" y="945" width="2.0" height="27.3" fill="#86a182"/><rect x="1216.8" y="945" width="1.9" height="27.3" fill="#bad1a0"/><rect x="1218.5" y="945" width="1.8" height="27.3" fill="#9fb37b"/><rect x="1220.1" y="945" width="1.8" height="27.3" fill="#c1d6a6"/><rect x="1221.8" y="945" width="1.2" height="27.3" fill="#9fb37b"/><rect x="1222.7" y="945" width="1.5" height="27.3" fill="#c6d7a0"/><rect x="1224.0" y="945" width="1.9" height="27.3" fill="#a7ba84"/><rect x="1225.7" y="945" width="1.6" height="27.3" fill="#c1d6a6"/><rect x="1227.1" y="945" width="1.6" height="27.3" fill="#a0b584"/><rect x="1228.5" y="945" width="2.0" height="27.3" fill="#c4d8a4"/><rect x="1230.3" y="945" width="1.0" height="27.3" fill="#97ad7c"/><rect x="1231.1" y="945" width="2.0" height="27.3" fill="#c4d8a4"/><rect x="1232.9" y="945" width="1.2" height="27.3" fill="#a3b67f"/><rect x="1233.9" y="945" width="1.3" height="27.3" fill="#bfd49f"/><rect x="1235.0" y="945" width="1.4" height="27.3" fill="#b0c28c"/><rect x="1236.2" y="945" width="1.3" height="27.3" fill="#bfd49f"/><rect x="1237.3" y="945" width="1.4" height="27.3" fill="#a0b584"/><rect x="1238.5" y="945" width="2.0" height="27.3" fill="#c1d6a6"/><rect x="1240.3" y="945" width="1.7" height="27.3" fill="#97ad7c"/><rect x="1241.9" y="945" width="2.0" height="27.3" fill="#bad1a0"/><rect x="1243.6" y="945" width="1.8" height="27.3" fill="#a3b67f"/><rect x="1245.3" y="945" width="1.8" height="27.3" fill="#c4d8a4"/><rect x="1246.8" y="945" width="1.2" height="27.3" fill="#a7ba84"/><rect x="1247.8" y="945" width="1.3" height="27.3" fill="#bfd49f"/><rect x="1248.9" y="945" width="1.3" height="27.3" fill="#b0c28c"/><rect x="1250.1" y="945" width="1.9" height="27.3" fill="#c9daa8"/><rect x="1251.8" y="945" width="1.1" height="27.3" fill="#9fb37b"/><rect x="1252.6" y="945" width="2.0" height="27.3" fill="#bad1a0"/><rect x="1254.4" y="945" width="1.4" height="27.3" fill="#9fb37b"/><rect x="1255.6" y="945" width="1.8" height="27.3" fill="#c6d7a0"/><rect x="1257.2" y="945" width="1.4" height="27.3" fill="#a0b584"/><rect x="1258.4" y="945" width="1.4" height="27.3" fill="#c9daa8"/><rect x="1259.6" y="945" width="1.7" height="27.3" fill="#9fb37b"/><rect x="1261.2" y="945" width="1.7" height="27.3" fill="#c6d7a0"/><rect x="1262.7" y="945" width="1.5" height="27.3" fill="#9fb37b"/><rect x="1264.0" y="945" width="1.7" height="27.3" fill="#bfd49f"/><rect x="1265.5" y="945" width="2.6" height="27.3" fill="#7d9a7e"/><rect x="1267.8" y="945" width="1.9" height="27.3" fill="#c4d8a4"/><rect x="1269.6" y="945" width="1.6" height="27.3" fill="#b0c28c"/><rect x="1270.9" y="945" width="1.2" height="27.3" fill="#bad1a0"/><rect x="1271.9" y="945" width="1.1" height="27.3" fill="#abbd83"/><rect x="1272.8" y="945" width="1.7" height="27.3" fill="#c6d7a0"/><rect x="1274.3" y="945" width="1.7" height="27.3" fill="#97ad7c"/><rect x="1275.8" y="945" width="1.3" height="27.3" fill="#c1d6a6"/><rect x="1276.9" y="945" width="2.6" height="27.3" fill="#7d9a7e"/><rect x="1279.3" y="945" width="1.1" height="27.3" fill="#bad1a0"/><rect x="1280.2" y="945" width="1.1" height="27.3" fill="#a0b584"/><rect x="1281.1" y="945" width="2.1" height="27.3" fill="#c9daa8"/><rect x="1283.0" y="945" width="1.1" height="27.3" fill="#a3b67f"/><rect x="1283.9" y="945" width="2.1" height="27.3" fill="#c1d6a6"/><rect x="1285.8" y="945" width="1.3" height="27.3" fill="#abbd83"/><rect x="1286.9" y="945" width="1.2" height="27.3" fill="#c1d6a6"/><rect x="1287.9" y="945" width="1.4" height="27.3" fill="#a0b584"/><rect x="1289.2" y="945" width="1.9" height="27.3" fill="#c1d6a6"/><rect x="1290.9" y="945" width="1.8" height="27.3" fill="#abbd83"/><rect x="1292.5" y="945" width="1.8" height="27.3" fill="#bfd49f"/><rect x="1294.1" y="945" width="1.1" height="27.3" fill="#a0b584"/><rect x="1295.0" y="945" width="1.1" height="27.3" fill="#c1d6a6"/><rect x="1295.9" y="945" width="1.6" height="27.3" fill="#a3b67f"/><rect x="1297.2" y="945" width="1.7" height="27.3" fill="#c6d7a0"/><rect x="1298.8" y="945" width="1.9" height="27.3" fill="#a0b584"/><rect x="1300.4" y="945" width="1.5" height="27.3" fill="#c1d6a6"/><rect x="1301.7" y="945" width="1.8" height="27.3" fill="#789878"/><rect x="1303.3" y="945" width="1.8" height="27.3" fill="#c9daa8"/><rect x="1305.0" y="945" width="1.2" height="27.3" fill="#97ad7c"/><rect x="1306.0" y="945" width="1.8" height="27.3" fill="#c9daa8"/><rect x="1307.6" y="945" width="1.3" height="27.3" fill="#a7ba84"/><rect x="1308.8" y="945" width="1.2" height="27.3" fill="#c4d8a4"/><rect x="1309.8" y="945" width="1.6" height="27.3" fill="#9fb37b"/><rect x="1311.2" y="945" width="1.3" height="27.3" fill="#bad1a0"/><rect x="1312.3" y="945" width="2.2" height="27.3" fill="#86a182"/><rect x="1314.2" y="945" width="1.2" height="27.3" fill="#c4d8a4"/><rect x="1315.2" y="945" width="1.1" height="27.3" fill="#97ad7c"/><rect x="1316.1" y="945" width="1.9" height="27.3" fill="#c9daa8"/><rect x="1317.8" y="945" width="1.4" height="27.3" fill="#b0c28c"/><rect x="1319.0" y="945" width="1.2" height="27.3" fill="#bfd49f"/><rect x="1320.0" y="945" width="1.7" height="27.3" fill="#97ad7c"/><rect x="1321.6" y="945" width="1.6" height="27.3" fill="#bad1a0"/><rect x="1323.0" y="945" width="1.7" height="27.3" fill="#b0c28c"/><rect x="1324.4" y="945" width="1.8" height="27.3" fill="#bfd49f"/><rect x="1326.0" y="945" width="1.5" height="27.3" fill="#a7ba84"/><rect x="1327.4" y="945" width="1.4" height="27.3" fill="#bfd49f"/><rect x="1328.5" y="945" width="1.6" height="27.3" fill="#a7ba84"/><rect x="1329.9" y="945" width="1.7" height="27.3" fill="#bfd49f"/><rect x="1331.4" y="945" width="1.7" height="27.3" fill="#a0b584"/><rect x="1332.9" y="945" width="1.2" height="27.3" fill="#c1d6a6"/><rect x="1333.9" y="945" width="1.7" height="27.3" fill="#a3b67f"/><rect x="1335.4" y="945" width="1.6" height="27.3" fill="#c9daa8"/><rect x="1336.8" y="945" width="1.5" height="27.3" fill="#b0c28c"/><rect x="1338.1" y="945" width="1.8" height="27.3" fill="#c6d7a0"/><rect x="1339.7" y="945" width="1.6" height="27.3" fill="#9fb37b"/><rect x="1341.1" y="945" width="1.7" height="27.3" fill="#c4d8a4"/><rect x="1342.6" y="945" width="1.2" height="27.3" fill="#a7ba84"/><rect x="1343.6" y="945" width="1.2" height="27.3" fill="#bad1a0"/><rect x="1344.6" y="945" width="1.6" height="27.3" fill="#a3b67f"/><rect x="1346.0" y="945" width="1.2" height="27.3" fill="#c9daa8"/><rect x="1347.0" y="945" width="1.8" height="27.3" fill="#97ad7c"/><rect x="1348.6" y="945" width="2.1" height="27.3" fill="#bfd49f"/><rect x="1350.5" y="945" width="1.5" height="27.3" fill="#b0c28c"/><rect x="1351.8" y="945" width="1.7" height="27.3" fill="#c6d7a0"/><rect x="1353.3" y="945" width="1.2" height="27.3" fill="#abbd83"/><rect x="1354.2" y="945" width="2.1" height="27.3" fill="#c9daa8"/><rect x="1356.1" y="945" width="1.1" height="27.3" fill="#a0b584"/><rect x="1357.0" y="945" width="1.1" height="27.3" fill="#c1d6a6"/><rect x="1357.9" y="945" width="1.2" height="27.3" fill="#b0c28c"/><rect x="1358.9" y="945" width="1.5" height="27.3" fill="#bfd49f"/><rect x="1360.2" y="945" width="1.5" height="27.3" fill="#a7ba84"/><rect x="1361.5" y="945" width="1.6" height="27.3" fill="#bad1a0"/><rect x="1362.9" y="945" width="1.9" height="27.3" fill="#abbd83"/><rect x="1364.5" y="945" width="1.2" height="27.3" fill="#c1d6a6"/><rect x="1365.6" y="945" width="1.8" height="27.3" fill="#b0c28c"/><rect x="1367.2" y="945" width="1.7" height="27.3" fill="#c4d8a4"/><rect x="1368.7" y="945" width="1.4" height="27.3" fill="#a7ba84"/><rect x="1369.9" y="945" width="1.2" height="27.3" fill="#bad1a0"/><rect x="1370.9" y="945" width="1.4" height="27.3" fill="#a3b67f"/><rect x="1372.1" y="945" width="1.6" height="27.3" fill="#c9daa8"/><rect x="1373.5" y="945" width="1.8" height="27.3" fill="#a7ba84"/><rect x="1375.1" y="945" width="1.7" height="27.3" fill="#c4d8a4"/><rect x="1376.7" y="945" width="1.7" height="27.3" fill="#97ad7c"/><rect x="1378.2" y="945" width="2.1" height="27.3" fill="#c6d7a0"/><rect x="1380.0" y="945" width="1.3" height="27.3" fill="#b0c28c"/><rect x="1381.2" y="945" width="2.0" height="27.3" fill="#c6d7a0"/><rect x="1383.0" y="945" width="1.7" height="27.3" fill="#97ad7c"/><rect x="1384.4" y="945" width="2.0" height="27.3" fill="#bad1a0"/><rect x="1386.2" y="945" width="1.8" height="27.3" fill="#97ad7c"/><rect x="1387.8" y="945" width="1.9" height="27.3" fill="#c4d8a4"/><rect x="1389.5" y="945" width="1.8" height="27.3" fill="#b0c28c"/><rect x="1391.1" y="945" width="1.4" height="27.3" fill="#c6d7a0"/><rect x="1392.4" y="945" width="1.8" height="27.3" fill="#a3b67f"/><rect x="1394.0" y="945" width="2.0" height="27.3" fill="#c9daa8"/><rect x="1395.8" y="945" width="1.8" height="27.3" fill="#abbd83"/><rect x="1397.4" y="945" width="1.5" height="27.3" fill="#c9daa8"/><rect x="1398.7" y="945" width="1.3" height="27.3" fill="#b0c28c"/><rect x="1399.8" y="945" width="2.0" height="27.3" fill="#bfd49f"/><rect x="1401.5" y="945" width="1.4" height="27.3" fill="#b0c28c"/><rect x="1402.7" y="945" width="2.0" height="27.3" fill="#c4d8a4"/><rect x="1404.5" y="945" width="1.1" height="27.3" fill="#9fb37b"/><rect x="1405.4" y="945" width="1.6" height="27.3" fill="#c1d6a6"/><rect x="1406.8" y="945" width="1.2" height="27.3" fill="#a7ba84"/><rect x="1407.9" y="945" width="2.1" height="27.3" fill="#c1d6a6"/><rect x="1409.8" y="945" width="1.6" height="27.3" fill="#a0b584"/><rect x="1411.2" y="945" width="1.6" height="27.3" fill="#c6d7a0"/><rect x="1412.6" y="945" width="1.2" height="27.3" fill="#abbd83"/><rect x="1413.6" y="945" width="1.5" height="27.3" fill="#c4d8a4"/><rect x="1414.9" y="945" width="1.1" height="27.3" fill="#a0b584"/><rect x="1415.8" y="945" width="1.2" height="27.3" fill="#c6d7a0"/><rect x="1416.8" y="945" width="1.4" height="27.3" fill="#a3b67f"/><rect x="1418.0" y="945" width="1.3" height="27.3" fill="#c9daa8"/><rect x="1419.2" y="945" width="1.8" height="27.3" fill="#789878"/><rect x="1420.8" y="945" width="2.0" height="27.3" fill="#c6d7a0"/><rect x="1422.6" y="945" width="1.3" height="27.3" fill="#b0c28c"/><rect x="1423.7" y="945" width="1.3" height="27.3" fill="#c9daa8"/><rect x="1424.8" y="945" width="2.7" height="27.3" fill="#8ea884"/><rect x="1427.3" y="945" width="1.4" height="27.3" fill="#bfd49f"/><rect x="1428.5" y="945" width="1.9" height="27.3" fill="#97ad7c"/><rect x="1430.2" y="945" width="2.0" height="27.3" fill="#bfd49f"/><rect x="1432.0" y="945" width="1.8" height="27.3" fill="#a7ba84"/><rect x="1433.6" y="945" width="1.3" height="27.3" fill="#c9daa8"/><rect x="1434.7" y="945" width="1.0" height="27.3" fill="#abbd83"/><rect x="1435.5" y="945" width="2.0" height="27.3" fill="#c6d7a0"/><rect x="1437.3" y="945" width="1.6" height="27.3" fill="#9fb37b"/><rect x="1438.7" y="945" width="2.0" height="27.3" fill="#c4d8a4"/><rect x="1440.5" y="945" width="1.3" height="27.3" fill="#a0b584"/><rect x="1441.6" y="945" width="1.4" height="27.3" fill="#c9daa8"/><rect x="1442.8" y="945" width="1.6" height="27.3" fill="#9fb37b"/><rect x="1444.3" y="945" width="1.4" height="27.3" fill="#bad1a0"/><rect x="1445.5" y="945" width="1.2" height="27.3" fill="#a0b584"/><rect x="1446.5" y="945" width="1.4" height="27.3" fill="#c1d6a6"/><rect x="1447.7" y="945" width="1.2" height="27.3" fill="#abbd83"/><rect x="1448.7" y="945" width="1.3" height="27.3" fill="#c1d6a6"/><rect x="1449.8" y="945" width="1.2" height="27.3" fill="#a0b584"/><rect x="1450.9" y="945" width="1.8" height="27.3" fill="#c4d8a4"/><rect x="1452.5" y="945" width="1.2" height="27.3" fill="#a3b67f"/><rect x="1453.5" y="945" width="2.0" height="27.3" fill="#bfd49f"/><rect x="1455.3" y="945" width="1.2" height="27.3" fill="#abbd83"/><rect x="1456.3" y="945" width="1.8" height="27.3" fill="#bad1a0"/><rect x="1457.9" y="945" width="1.4" height="27.3" fill="#b0c28c"/><rect x="1459.1" y="945" width="1.2" height="27.3" fill="#c4d8a4"/><rect x="1460.0" y="945" width="2.3" height="27.3" fill="#8ea884"/><rect x="1462.1" y="945" width="1.5" height="27.3" fill="#c6d7a0"/><rect x="1463.5" y="945" width="1.9" height="27.3" fill="#7d9a7e"/><rect x="1465.2" y="945" width="1.3" height="27.3" fill="#c9daa8"/><rect x="1466.4" y="945" width="1.0" height="27.3" fill="#a0b584"/><rect x="1467.2" y="945" width="2.0" height="27.3" fill="#c4d8a4"/><rect x="1469.0" y="945" width="1.8" height="27.3" fill="#b0c28c"/><rect x="1470.6" y="945" width="1.5" height="27.3" fill="#bad1a0"/><rect x="1471.9" y="945" width="1.7" height="27.3" fill="#8ea884"/><rect x="1473.4" y="945" width="1.4" height="27.3" fill="#bad1a0"/><rect x="1474.6" y="945" width="1.5" height="27.3" fill="#b0c28c"/><rect x="1475.9" y="945" width="1.9" height="27.3" fill="#c1d6a6"/><rect x="1477.6" y="945" width="1.5" height="27.3" fill="#b0c28c"/><rect x="1478.8" y="945" width="1.3" height="27.3" fill="#bfd49f"/><rect x="1479.9" y="945" width="1.4" height="27.3" fill="#abbd83"/><rect x="1481.1" y="945" width="1.5" height="27.3" fill="#c9daa8"/><rect x="1482.5" y="945" width="1.7" height="27.3" fill="#9fb37b"/><rect x="1484.0" y="945" width="1.4" height="27.3" fill="#c6d7a0"/><rect x="1485.1" y="945" width="1.5" height="27.3" fill="#97ad7c"/><rect x="1486.4" y="945" width="1.4" height="27.3" fill="#bfd49f"/><rect x="1487.6" y="945" width="1.6" height="27.3" fill="#b0c28c"/><rect x="1489.1" y="945" width="1.5" height="27.3" fill="#bfd49f"/><rect x="1490.4" y="945" width="1.5" height="27.3" fill="#b0c28c"/><rect x="1491.7" y="945" width="1.6" height="27.3" fill="#bad1a0"/><rect x="1493.1" y="945" width="1.7" height="27.3" fill="#a0b584"/><rect x="1494.6" y="945" width="1.9" height="27.3" fill="#c4d8a4"/><rect x="1496.3" y="945" width="1.2" height="27.3" fill="#abbd83"/><rect x="1497.3" y="945" width="1.6" height="27.3" fill="#c1d6a6"/><rect x="1498.7" y="945" width="1.1" height="27.3" fill="#a3b67f"/><rect x="1499.6" y="945" width="1.5" height="27.3" fill="#c1d6a6"/><rect x="1501.0" y="945" width="1.6" height="27.3" fill="#b0c28c"/><rect x="1502.3" y="945" width="1.9" height="27.3" fill="#c6d7a0"/><rect x="1504.0" y="945" width="1.6" height="27.3" fill="#b0c28c"/><rect x="1505.4" y="945" width="1.3" height="27.3" fill="#c9daa8"/><rect x="1506.5" y="945" width="1.4" height="27.3" fill="#abbd83"/><rect x="1507.7" y="945" width="1.9" height="27.3" fill="#bad1a0"/><rect x="1509.4" y="945" width="2.1" height="27.3" fill="#8ea884"/><rect x="1511.3" y="945" width="1.8" height="27.3" fill="#c1d6a6"/><rect x="1512.9" y="945" width="1.0" height="27.3" fill="#97ad7c"/><rect x="1513.8" y="945" width="1.9" height="27.3" fill="#c6d7a0"/><rect x="1515.4" y="945" width="1.1" height="27.3" fill="#97ad7c"/><rect x="1516.3" y="945" width="1.6" height="27.3" fill="#c4d8a4"/><rect x="1517.8" y="945" width="2.1" height="27.3" fill="#7d9a7e"/><rect x="1519.7" y="945" width="1.2" height="27.3" fill="#c6d7a0"/><rect x="1520.7" y="945" width="1.4" height="27.3" fill="#a7ba84"/><rect x="1521.8" y="945" width="2.1" height="27.3" fill="#c1d6a6"/><rect x="1523.7" y="945" width="1.7" height="27.3" fill="#abbd83"/><rect x="1525.2" y="945" width="1.7" height="27.3" fill="#c9daa8"/><rect x="1526.7" y="945" width="1.5" height="27.3" fill="#9fb37b"/><rect x="1528.0" y="945" width="1.5" height="27.3" fill="#c4d8a4"/><rect x="1529.3" y="945" width="1.3" height="27.3" fill="#a3b67f"/><rect x="1530.4" y="945" width="2.0" height="27.3" fill="#c6d7a0"/><rect x="1532.3" y="945" width="1.1" height="27.3" fill="#b0c28c"/><rect x="1533.2" y="945" width="1.7" height="27.3" fill="#c4d8a4"/><rect x="1534.8" y="945" width="1.5" height="27.3" fill="#a0b584"/><rect x="1536.1" y="945" width="2.0" height="27.3" fill="#bfd49f"/><rect x="1537.9" y="945" width="1.4" height="27.3" fill="#a0b584"/><rect x="1539.0" y="945" width="1.3" height="27.3" fill="#bad1a0"/><rect x="1540.1" y="945" width="1.2" height="27.3" fill="#a3b67f"/><rect x="1541.1" y="945" width="1.3" height="27.3" fill="#c6d7a0"/><rect x="1542.3" y="945" width="1.4" height="27.3" fill="#97ad7c"/><rect x="1543.5" y="945" width="1.3" height="27.3" fill="#bad1a0"/><rect x="1544.6" y="945" width="1.4" height="27.3" fill="#97ad7c"/><rect x="1545.9" y="945" width="2.1" height="27.3" fill="#c1d6a6"/><rect x="1547.8" y="945" width="1.4" height="27.3" fill="#b0c28c"/><rect x="1549.0" y="945" width="1.5" height="27.3" fill="#c4d8a4"/><rect x="1550.3" y="945" width="1.9" height="27.3" fill="#8ea884"/><rect x="1552.0" y="945" width="1.7" height="27.3" fill="#c6d7a0"/><rect x="1553.5" y="945" width="1.2" height="27.3" fill="#97ad7c"/><rect x="1554.6" y="945" width="1.7" height="27.3" fill="#c1d6a6"/><rect x="1556.0" y="945" width="1.2" height="27.3" fill="#a3b67f"/><rect x="1557.1" y="945" width="1.2" height="27.3" fill="#c1d6a6"/><rect x="1558.0" y="945" width="1.3" height="27.3" fill="#a0b584"/><rect x="1559.2" y="945" width="1.3" height="27.3" fill="#c4d8a4"/><rect x="1560.3" y="945" width="2.0" height="27.3" fill="#789878"/><rect x="1562.1" y="945" width="1.5" height="27.3" fill="#bad1a0"/><rect x="1563.4" y="945" width="1.7" height="27.3" fill="#b0c28c"/><rect x="1564.9" y="945" width="1.8" height="27.3" fill="#c9daa8"/><rect x="1566.5" y="945" width="1.2" height="27.3" fill="#a7ba84"/><rect x="1567.5" y="945" width="1.3" height="27.3" fill="#c6d7a0"/><rect x="1568.6" y="945" width="1.0" height="27.3" fill="#a3b67f"/><rect x="1569.4" y="945" width="1.5" height="27.3" fill="#bad1a0"/><rect x="1570.7" y="945" width="1.1" height="27.3" fill="#abbd83"/><rect x="1571.7" y="945" width="1.6" height="27.3" fill="#c9daa8"/><rect x="1573.1" y="945" width="1.6" height="27.3" fill="#9fb37b"/><rect x="1574.5" y="945" width="2.0" height="27.3" fill="#c9daa8"/><rect x="1576.3" y="945" width="1.4" height="27.3" fill="#9fb37b"/><rect x="1577.5" y="945" width="1.5" height="27.3" fill="#c9daa8"/><rect x="1578.8" y="945" width="1.3" height="27.3" fill="#a3b67f"/><rect x="1579.8" y="945" width="1.7" height="27.3" fill="#bfd49f"/><rect x="1581.4" y="945" width="1.6" height="27.3" fill="#789878"/><rect x="1582.8" y="945" width="1.7" height="27.3" fill="#c1d6a6"/><rect x="1584.2" y="945" width="1.6" height="27.3" fill="#a0b584"/><rect x="1585.7" y="945" width="1.3" height="27.3" fill="#c1d6a6"/><rect x="1586.8" y="945" width="1.1" height="27.3" fill="#a0b584"/><rect x="1587.7" y="945" width="2.0" height="27.3" fill="#bfd49f"/><rect x="1589.4" y="945" width="1.2" height="27.3" fill="#a0b584"/><rect x="1590.5" y="945" width="1.5" height="27.3" fill="#bad1a0"/><rect x="1591.8" y="945" width="1.4" height="27.3" fill="#a3b67f"/><rect x="1593.0" y="945" width="1.4" height="27.3" fill="#c1d6a6"/><rect x="1594.2" y="945" width="1.1" height="27.3" fill="#97ad7c"/><rect x="1595.2" y="945" width="1.3" height="27.3" fill="#bfd49f"/><rect x="1596.3" y="945" width="1.6" height="27.3" fill="#b0c28c"/><rect x="1597.7" y="945" width="1.2" height="27.3" fill="#c9daa8"/><rect x="1598.7" y="945" width="1.7" height="27.3" fill="#97ad7c"/><rect x="1600.2" y="945" width="1.7" height="27.3" fill="#c1d6a6"/><rect x="1601.7" y="945" width="1.3" height="27.3" fill="#a7ba84"/><rect x="1602.8" y="945" width="2.0" height="27.3" fill="#c4d8a4"/><rect x="1604.6" y="945" width="1.1" height="27.3" fill="#97ad7c"/><rect x="1605.5" y="945" width="1.4" height="27.3" fill="#bad1a0"/><rect x="1606.6" y="945" width="1.5" height="27.3" fill="#97ad7c"/><rect x="1608.0" y="945" width="1.8" height="27.3" fill="#c9daa8"/><rect x="1609.6" y="945" width="1.6" height="27.3" fill="#8ea884"/><rect x="1611.0" y="945" width="2.0" height="27.3" fill="#c6d7a0"/><rect x="1612.8" y="945" width="1.7" height="27.3" fill="#9fb37b"/><rect x="1614.3" y="945" width="1.7" height="27.3" fill="#bad1a0"/><rect x="1615.9" y="945" width="1.9" height="27.3" fill="#a3b67f"/><rect x="1617.5" y="945" width="1.1" height="27.3" fill="#c1d6a6"/><rect x="1618.5" y="945" width="1.7" height="27.3" fill="#abbd83"/><rect x="1620.0" y="945" width="1.1" height="27.3" fill="#c6d7a0"/><rect x="1620.9" y="945" width="1.4" height="27.3" fill="#a3b67f"/><rect x="1622.1" y="945" width="1.2" height="27.3" fill="#bad1a0"/><rect x="1623.1" y="945" width="1.3" height="27.3" fill="#97ad7c"/><rect x="1624.2" y="945" width="1.1" height="27.3" fill="#bfd49f"/><rect x="1625.1" y="945" width="1.2" height="27.3" fill="#97ad7c"/><rect x="1626.2" y="945" width="1.5" height="27.3" fill="#c4d8a4"/><rect x="1627.4" y="945" width="1.2" height="27.3" fill="#9fb37b"/><rect x="1628.4" y="945" width="1.4" height="27.3" fill="#bfd49f"/><rect x="1629.6" y="945" width="1.0" height="27.3" fill="#b0c28c"/><rect x="1630.4" y="945" width="2.1" height="27.3" fill="#c4d8a4"/><rect x="1632.3" y="945" width="1.4" height="27.3" fill="#abbd83"/><rect x="1633.5" y="945" width="1.9" height="27.3" fill="#c4d8a4"/><rect x="1635.2" y="945" width="1.5" height="27.3" fill="#a0b584"/><rect x="1636.5" y="945" width="1.8" height="27.3" fill="#c9daa8"/><rect x="1638.1" y="945" width="1.1" height="27.3" fill="#a7ba84"/><rect x="1639.0" y="945" width="1.4" height="27.3" fill="#c1d6a6"/><rect x="1640.2" y="945" width="1.4" height="27.3" fill="#9fb37b"/><rect x="1641.3" y="945" width="2.1" height="27.3" fill="#bfd49f"/><rect x="1643.2" y="945" width="1.6" height="27.3" fill="#97ad7c"/><rect x="1644.5" y="945" width="1.9" height="27.3" fill="#c9daa8"/><rect x="1646.3" y="945" width="1.3" height="27.3" fill="#abbd83"/><rect x="1647.3" y="945" width="1.8" height="27.3" fill="#bad1a0"/><rect x="1648.9" y="945" width="1.2" height="27.3" fill="#a3b67f"/><rect x="1649.9" y="945" width="1.8" height="27.3" fill="#c6d7a0"/><rect x="1651.5" y="945" width="1.8" height="27.3" fill="#a7ba84"/><rect x="1653.1" y="945" width="1.9" height="27.3" fill="#c1d6a6"/><rect x="1654.8" y="945" width="1.8" height="27.3" fill="#b0c28c"/><rect x="1656.4" y="945" width="1.9" height="27.3" fill="#bad1a0"/><rect x="1658.1" y="945" width="2.3" height="27.3" fill="#789878"/><rect x="1660.2" y="945" width="2.0" height="27.3" fill="#c4d8a4"/><rect x="1662.0" y="945" width="1.4" height="27.3" fill="#abbd83"/><rect x="1663.1" y="945" width="1.9" height="27.3" fill="#bad1a0"/><rect x="1664.8" y="945" width="1.6" height="27.3" fill="#a3b67f"/><rect x="1666.2" y="945" width="1.8" height="27.3" fill="#c9daa8"/><rect x="1667.8" y="945" width="1.8" height="27.3" fill="#9fb37b"/><rect x="1669.4" y="945" width="1.9" height="27.3" fill="#bfd49f"/><rect x="1671.1" y="945" width="1.4" height="27.3" fill="#abbd83"/><rect x="1672.3" y="945" width="1.2" height="27.3" fill="#c1d6a6"/><rect x="1673.3" y="945" width="1.7" height="27.3" fill="#9fb37b"/><rect x="1674.8" y="945" width="1.3" height="27.3" fill="#c6d7a0"/><rect x="1675.9" y="945" width="1.2" height="27.3" fill="#9fb37b"/><rect x="1677.0" y="945" width="2.1" height="27.3" fill="#bad1a0"/><rect x="1678.8" y="945" width="1.8" height="27.3" fill="#9fb37b"/><rect x="1680.5" y="945" width="1.4" height="27.3" fill="#c9daa8"/><rect x="1681.6" y="945" width="1.6" height="27.3" fill="#97ad7c"/><rect x="1683.0" y="945" width="1.5" height="27.3" fill="#c1d6a6"/><rect x="1684.3" y="945" width="1.0" height="27.3" fill="#abbd83"/><rect x="1685.1" y="945" width="2.1" height="27.3" fill="#c4d8a4"/><rect x="1687.0" y="945" width="1.3" height="27.3" fill="#b0c28c"/><rect x="1688.2" y="945" width="2.1" height="27.3" fill="#c4d8a4"/><rect x="1690.1" y="945" width="1.8" height="27.3" fill="#a0b584"/><rect x="1691.7" y="945" width="1.6" height="27.3" fill="#bad1a0"/><rect x="1693.1" y="945" width="1.1" height="27.3" fill="#97ad7c"/><rect x="1694.0" y="945" width="1.9" height="27.3" fill="#c1d6a6"/><rect x="1695.7" y="945" width="1.4" height="27.3" fill="#b0c28c"/><rect x="1696.8" y="945" width="1.5" height="27.3" fill="#bfd49f"/><rect x="1698.1" y="945" width="1.4" height="27.3" fill="#abbd83"/><rect x="1699.3" y="945" width="1.3" height="27.3" fill="#c9daa8"/><rect x="1700.4" y="945" width="1.1" height="27.3" fill="#9fb37b"/><rect x="1701.3" y="945" width="1.9" height="27.3" fill="#c6d7a0"/><rect x="1703.1" y="945" width="1.2" height="27.3" fill="#97ad7c"/><rect x="1704.1" y="945" width="1.5" height="27.3" fill="#bfd49f"/><rect x="1705.4" y="945" width="1.0" height="27.3" fill="#b0c28c"/><rect x="1706.2" y="945" width="1.7" height="27.3" fill="#c9daa8"/><rect x="1707.7" y="945" width="1.2" height="27.3" fill="#9fb37b"/><rect x="1708.8" y="945" width="1.2" height="27.3" fill="#bfd49f"/><rect x="1709.7" y="945" width="1.2" height="27.3" fill="#a7ba84"/><rect x="1710.8" y="945" width="1.3" height="27.3" fill="#c4d8a4"/><rect x="1711.8" y="945" width="1.3" height="27.3" fill="#a7ba84"/><rect x="1712.9" y="945" width="1.1" height="27.3" fill="#c9daa8"/><rect x="1713.8" y="945" width="1.9" height="27.3" fill="#9fb37b"/><rect x="1715.5" y="945" width="2.1" height="27.3" fill="#bad1a0"/><rect x="1717.4" y="945" width="1.4" height="27.3" fill="#a0b584"/><rect x="1718.6" y="945" width="1.7" height="27.3" fill="#c6d7a0"/><rect x="1720.0" y="945" width="2.3" height="27.3" fill="#8ea884"/><rect x="1722.1" y="945" width="1.4" height="27.3" fill="#c9daa8"/><rect x="1723.3" y="945" width="1.9" height="27.3" fill="#97ad7c"/><rect x="1725.0" y="945" width="1.7" height="27.3" fill="#c1d6a6"/><rect x="1726.4" y="945" width="2.6" height="27.3" fill="#7d9a7e"/><rect x="1728.9" y="945" width="1.6" height="27.3" fill="#c1d6a6"/><rect x="1730.3" y="945" width="2.0" height="27.3" fill="#8ea884"/><rect x="1732.1" y="945" width="1.2" height="27.3" fill="#bad1a0"/><rect x="1733.1" y="945" width="1.9" height="27.3" fill="#8ea884"/><rect x="1734.7" y="945" width="1.1" height="27.3" fill="#c6d7a0"/><rect x="1735.7" y="945" width="1.2" height="27.3" fill="#abbd83"/><rect x="1736.7" y="945" width="1.6" height="27.3" fill="#c9daa8"/><rect x="1738.1" y="945" width="1.7" height="27.3" fill="#a0b584"/><rect x="1739.6" y="945" width="1.9" height="27.3" fill="#c4d8a4"/><rect x="1741.3" y="945" width="1.4" height="27.3" fill="#a0b584"/><rect x="1742.6" y="945" width="1.8" height="27.3" fill="#c9daa8"/><rect x="1744.2" y="945" width="1.6" height="27.3" fill="#a7ba84"/><rect x="1745.5" y="945" width="1.7" height="27.3" fill="#bfd49f"/><rect x="1747.0" y="945" width="1.7" height="27.3" fill="#b0c28c"/><rect x="1748.5" y="945" width="1.8" height="27.3" fill="#c9daa8"/><rect x="1750.0" y="945" width="1.4" height="27.3" fill="#a3b67f"/><rect x="1751.2" y="945" width="1.4" height="27.3" fill="#c1d6a6"/><rect x="1752.4" y="945" width="1.1" height="27.3" fill="#a3b67f"/><rect x="1753.3" y="945" width="1.3" height="27.3" fill="#bfd49f"/><rect x="1754.4" y="945" width="1.7" height="27.3" fill="#b0c28c"/><rect x="1755.9" y="945" width="1.4" height="27.3" fill="#bfd49f"/><rect x="1757.1" y="945" width="1.1" height="27.3" fill="#9fb37b"/><rect x="1758.0" y="945" width="1.5" height="27.3" fill="#bfd49f"/><rect x="1759.2" y="945" width="1.0" height="27.3" fill="#b0c28c"/><rect x="1760.0" y="945" width="1.2" height="27.3" fill="#c4d8a4"/><rect x="1761.0" y="945" width="1.5" height="27.3" fill="#a0b584"/><rect x="1762.3" y="945" width="1.3" height="27.3" fill="#bfd49f"/><rect x="1763.4" y="945" width="1.7" height="27.3" fill="#a7ba84"/><rect x="1764.9" y="945" width="1.7" height="27.3" fill="#c9daa8"/><rect x="1766.3" y="945" width="1.9" height="27.3" fill="#9fb37b"/><rect x="1768.0" y="945" width="1.6" height="27.3" fill="#c1d6a6"/><rect x="1769.4" y="945" width="1.7" height="27.3" fill="#a7ba84"/><rect x="1770.9" y="945" width="1.8" height="27.3" fill="#c9daa8"/><rect x="1772.5" y="945" width="1.7" height="27.3" fill="#b0c28c"/><rect x="1774.0" y="945" width="2.1" height="27.3" fill="#bfd49f"/><rect x="1775.9" y="945" width="1.6" height="27.3" fill="#abbd83"/><rect x="1777.3" y="945" width="1.2" height="27.3" fill="#c6d7a0"/><rect x="1778.3" y="945" width="1.8" height="27.3" fill="#a0b584"/><rect x="1779.9" y="945" width="1.8" height="27.3" fill="#bad1a0"/><rect x="1781.5" y="945" width="1.5" height="27.3" fill="#a7ba84"/><rect x="1782.8" y="945" width="1.2" height="27.3" fill="#c1d6a6"/><rect x="1783.8" y="945" width="1.4" height="27.3" fill="#abbd83"/><rect x="1785.0" y="945" width="1.6" height="27.3" fill="#bad1a0"/><rect x="1786.4" y="945" width="1.3" height="27.3" fill="#b0c28c"/><rect x="1787.5" y="945" width="1.7" height="27.3" fill="#c6d7a0"/><rect x="1789.0" y="945" width="1.5" height="27.3" fill="#97ad7c"/><rect x="1790.3" y="945" width="1.5" height="27.3" fill="#c6d7a0"/><rect x="1791.6" y="945" width="1.7" height="27.3" fill="#8ea884"/><rect x="1793.1" y="945" width="1.3" height="27.3" fill="#bad1a0"/><rect x="1794.1" y="945" width="1.2" height="27.3" fill="#b0c28c"/><rect x="1795.2" y="945" width="1.4" height="27.3" fill="#c1d6a6"/><rect x="1796.4" y="945" width="1.5" height="27.3" fill="#a7ba84"/><rect x="1797.7" y="945" width="2.0" height="27.3" fill="#bfd49f"/><rect x="1799.4" y="945" width="1.8" height="27.3" fill="#a7ba84"/><rect x="1801.0" y="945" width="1.3" height="27.3" fill="#c1d6a6"/><rect x="1802.2" y="945" width="1.1" height="27.3" fill="#a7ba84"/><rect x="1803.1" y="945" width="1.9" height="27.3" fill="#c6d7a0"/><rect x="1804.8" y="945" width="1.2" height="27.3" fill="#9fb37b"/><rect x="1805.8" y="945" width="2.0" height="27.3" fill="#c1d6a6"/><rect x="1807.6" y="945" width="1.5" height="27.3" fill="#a3b67f"/><rect x="1808.9" y="945" width="1.6" height="27.3" fill="#c6d7a0"/><rect x="1810.2" y="945" width="2.1" height="27.3" fill="#789878"/><rect x="1812.1" y="945" width="1.4" height="27.3" fill="#c1d6a6"/><rect x="1813.3" y="945" width="1.1" height="27.3" fill="#97ad7c"/><rect x="1814.2" y="945" width="1.9" height="27.3" fill="#bad1a0"/><rect x="1815.9" y="945" width="1.1" height="27.3" fill="#97ad7c"/><rect x="1816.8" y="945" width="2.0" height="27.3" fill="#c6d7a0"/><rect x="1818.5" y="945" width="1.1" height="27.3" fill="#9fb37b"/><rect x="1819.4" y="945" width="1.9" height="27.3" fill="#bfd49f"/><rect x="1821.1" y="945" width="1.0" height="27.3" fill="#a3b67f"/><rect x="1821.9" y="945" width="2.1" height="27.3" fill="#bfd49f"/><rect x="1823.8" y="945" width="1.1" height="27.3" fill="#9fb37b"/><rect x="1824.7" y="945" width="1.7" height="27.3" fill="#c4d8a4"/><rect x="1826.2" y="945" width="1.6" height="27.3" fill="#97ad7c"/><rect x="1827.6" y="945" width="1.2" height="27.3" fill="#c1d6a6"/><rect x="1828.5" y="945" width="1.6" height="27.3" fill="#abbd83"/><rect x="1829.9" y="945" width="2.1" height="27.3" fill="#c6d7a0"/><rect x="1831.8" y="945" width="1.4" height="27.3" fill="#a7ba84"/><rect x="1833.0" y="945" width="1.9" height="27.3" fill="#c1d6a6"/><rect x="1834.7" y="945" width="1.6" height="27.3" fill="#a3b67f"/><rect x="1836.0" y="945" width="1.8" height="27.3" fill="#bfd49f"/><rect x="1837.6" y="945" width="1.2" height="27.3" fill="#9fb37b"/><rect x="1838.6" y="945" width="1.3" height="27.3" fill="#c6d7a0"/><rect x="1839.6" y="945" width="1.1" height="27.3" fill="#a7ba84"/><rect x="1840.5" y="945" width="1.4" height="27.3" fill="#c9daa8"/><rect x="1841.7" y="945" width="1.3" height="27.3" fill="#9fb37b"/><rect x="1842.8" y="945" width="1.1" height="27.3" fill="#c4d8a4"/><rect x="1843.7" y="945" width="1.7" height="27.3" fill="#a3b67f"/><rect x="1845.2" y="945" width="2.0" height="27.3" fill="#bad1a0"/><rect x="1847.0" y="945" width="1.1" height="27.3" fill="#a3b67f"/><rect x="1847.8" y="945" width="1.5" height="27.3" fill="#c6d7a0"/><rect x="1849.2" y="945" width="1.4" height="27.3" fill="#b0c28c"/><rect x="1850.4" y="945" width="1.2" height="27.3" fill="#c4d8a4"/><rect x="1851.4" y="945" width="1.6" height="27.3" fill="#9fb37b"/><rect x="1852.8" y="945" width="1.6" height="27.3" fill="#c4d8a4"/><rect x="1854.2" y="945" width="1.8" height="27.3" fill="#a3b67f"/><rect x="1855.8" y="945" width="2.1" height="27.3" fill="#c4d8a4"/><rect x="1857.7" y="945" width="1.4" height="27.3" fill="#97ad7c"/><rect x="1858.9" y="945" width="1.5" height="27.3" fill="#c1d6a6"/><rect x="1860.1" y="945" width="1.2" height="27.3" fill="#abbd83"/><rect x="1861.1" y="945" width="1.2" height="27.3" fill="#bad1a0"/><rect x="1862.1" y="945" width="1.5" height="27.3" fill="#abbd83"/><rect x="1863.4" y="945" width="2.1" height="27.3" fill="#c9daa8"/><rect x="1865.3" y="945" width="1.0" height="27.3" fill="#b0c28c"/><rect x="1866.1" y="945" width="1.3" height="27.3" fill="#bad1a0"/><rect x="1867.2" y="945" width="1.5" height="27.3" fill="#a0b584"/><rect x="1868.6" y="945" width="1.4" height="27.3" fill="#bad1a0"/><rect x="1869.7" y="945" width="1.1" height="27.3" fill="#a0b584"/><rect x="1870.6" y="945" width="1.9" height="27.3" fill="#c4d8a4"/><rect x="1872.3" y="945" width="1.1" height="27.3" fill="#9fb37b"/><rect x="1873.2" y="945" width="1.2" height="27.3" fill="#c9daa8"/><rect x="1874.2" y="945" width="1.6" height="27.3" fill="#8ea884"/><rect x="1875.6" y="945" width="2.1" height="27.3" fill="#c4d8a4"/><rect x="1877.5" y="945" width="1.1" height="27.3" fill="#a7ba84"/><rect x="1878.4" y="945" width="1.5" height="27.3" fill="#bad1a0"/><rect x="1879.7" y="945" width="1.4" height="27.3" fill="#abbd83"/><rect x="1880.9" y="945" width="1.7" height="27.3" fill="#bfd49f"/><rect x="1882.4" y="945" width="1.9" height="27.3" fill="#97ad7c"/><rect x="1884.1" y="945" width="1.5" height="27.3" fill="#bfd49f"/><rect x="1885.5" y="945" width="1.6" height="27.3" fill="#a7ba84"/><rect x="1886.9" y="945" width="1.2" height="27.3" fill="#bad1a0"/><rect x="1887.9" y="945" width="1.7" height="27.3" fill="#9fb37b"/><rect x="1889.4" y="945" width="1.6" height="27.3" fill="#c6d7a0"/><rect x="1890.8" y="945" width="1.3" height="27.3" fill="#9fb37b"/><rect x="1891.9" y="945" width="1.6" height="27.3" fill="#c4d8a4"/><rect x="1893.3" y="945" width="1.1" height="27.3" fill="#9fb37b"/><rect x="1894.2" y="945" width="2.1" height="27.3" fill="#c1d6a6"/><rect x="1896.1" y="945" width="1.7" height="27.3" fill="#a3b67f"/><rect x="1897.5" y="945" width="1.8" height="27.3" fill="#c1d6a6"/><rect x="1899.1" y="945" width="1.8" height="27.3" fill="#97ad7c"/><rect x="1900.7" y="945" width="1.6" height="27.3" fill="#c4d8a4"/><rect x="1902.1" y="945" width="1.3" height="27.3" fill="#a0b584"/><rect x="1903.2" y="945" width="2.0" height="27.3" fill="#c4d8a4"/><rect x="1905.0" y="945" width="1.4" height="27.3" fill="#b0c28c"/><rect x="1906.2" y="945" width="1.6" height="27.3" fill="#c4d8a4"/><rect x="1907.6" y="945" width="1.1" height="27.3" fill="#b0c28c"/><rect x="1908.5" y="945" width="1.7" height="27.3" fill="#c4d8a4"/><rect x="1909.9" y="945" width="1.1" height="27.3" fill="#a7ba84"/><rect x="1910.9" y="945" width="1.6" height="27.3" fill="#c9daa8"/><rect x="1912.3" y="945" width="1.7" height="27.3" fill="#9fb37b"/><rect x="1913.8" y="945" width="1.7" height="27.3" fill="#bad1a0"/><rect x="1915.3" y="945" width="1.9" height="27.3" fill="#789878"/><rect x="1916.9" y="945" width="1.3" height="27.3" fill="#c4d8a4"/><rect x="1918.0" y="945" width="1.8" height="27.3" fill="#a7ba84"/><rect x="1919.6" y="945" width="1.9" height="27.3" fill="#c6d7a0"/><rect x="1921.3" y="945" width="1.9" height="27.3" fill="#b0c28c"/><rect x="1922.9" y="945" width="1.3" height="27.3" fill="#c6d7a0"/><rect x="1924.0" y="945" width="1.8" height="27.3" fill="#a7ba84"/><rect x="1925.6" y="945" width="1.5" height="27.3" fill="#c4d8a4"/><rect x="1926.9" y="945" width="1.7" height="27.3" fill="#a7ba84"/><rect x="1928.4" y="945" width="1.8" height="27.3" fill="#c1d6a6"/><rect x="1930.1" y="945" width="1.3" height="27.3" fill="#b0c28c"/><rect x="1931.1" y="945" width="1.1" height="27.3" fill="#c4d8a4"/><rect x="1932.1" y="945" width="1.8" height="27.3" fill="#b0c28c"/><rect x="1933.7" y="945" width="1.7" height="27.3" fill="#c4d8a4"/><rect x="1935.2" y="945" width="1.3" height="27.3" fill="#9fb37b"/><rect x="1936.3" y="945" width="1.4" height="27.3" fill="#c4d8a4"/><rect x="1937.4" y="945" width="1.4" height="27.3" fill="#97ad7c"/><rect x="1938.6" y="945" width="1.3" height="27.3" fill="#c6d7a0"/><rect x="1939.7" y="945" width="1.5" height="27.3" fill="#b0c28c"/><rect x="1941.0" y="945" width="2.0" height="27.3" fill="#c4d8a4"/><rect x="1942.9" y="945" width="1.3" height="27.3" fill="#abbd83"/><rect x="1943.9" y="945" width="1.7" height="27.3" fill="#bfd49f"/><rect x="1945.4" y="945" width="1.4" height="27.3" fill="#97ad7c"/><rect x="1946.6" y="945" width="1.5" height="27.3" fill="#c1d6a6"/><rect x="1947.9" y="945" width="1.4" height="27.3" fill="#a7ba84"/><rect x="1949.1" y="945" width="1.4" height="27.3" fill="#c6d7a0"/><rect x="1950.3" y="945" width="2.2" height="27.3" fill="#8ea884"/><rect x="1952.4" y="945" width="1.5" height="27.3" fill="#bfd49f"/><rect x="1953.7" y="945" width="1.6" height="27.3" fill="#a7ba84"/><rect x="1955.1" y="945" width="1.4" height="27.3" fill="#bad1a0"/><rect x="1956.3" y="945" width="1.5" height="27.3" fill="#b0c28c"/><rect x="1957.6" y="945" width="1.6" height="27.3" fill="#c4d8a4"/><rect x="1959.0" y="945" width="1.5" height="27.3" fill="#a7ba84"/><rect x="1960.3" y="945" width="1.1" height="27.3" fill="#c6d7a0"/><rect x="1961.2" y="945" width="1.2" height="27.3" fill="#b0c28c"/><rect x="1962.2" y="945" width="1.8" height="27.3" fill="#c9daa8"/><rect x="1963.8" y="945" width="1.7" height="27.3" fill="#a7ba84"/><rect x="1965.3" y="945" width="1.4" height="27.3" fill="#bad1a0"/><rect x="1966.5" y="945" width="1.7" height="27.3" fill="#a3b67f"/><rect x="717.6" y="319" width="1.3" height="677" fill="#b9bac8"/><rect x="718.9" y="319" width="1.6" height="677" fill="#dcdce6"/><rect x="719.2" y="981.7" width="1250" height="16" fill="#46aa87"/><rect x="1960.3" y="381" width="2.6" height="193" rx="1.3" fill="#b9b9bd" fill-opacity="0.85"/></svg>
<div class="abs" style="left:723px;top:342.5px;width:15.4px;height:19px;background:rgba(255,255,255,0.6)"></div>
<span class="t" id="t42" style="left:726.6px;top:343.1px;font-size:15px;line-height:18.00px;color:#666;transform:scaleX(0.7670);">0</span>
<div class="abs" style="left:723px;top:402.5px;width:15.4px;height:19px;background:rgba(255,255,255,0.6)"></div>
<span class="t" id="t43" style="left:726.6px;top:403.1px;font-size:15px;line-height:18.00px;color:#666;transform:scaleX(0.7670);">0</span>
<div class="abs" style="left:723px;top:462.5px;width:34.4px;height:19px;background:rgba(255,255,255,0.6)"></div>
<span class="t" id="t44" style="left:726.6px;top:463.1px;font-size:15px;line-height:18.00px;color:#666;transform:scaleX(0.8702);">45M</span>
<div class="abs" style="left:723px;top:522.5px;width:34.4px;height:19px;background:rgba(255,255,255,0.6)"></div>
<span class="t" id="t45" style="left:726.6px;top:523.1px;font-size:15px;line-height:18.00px;color:#666;transform:scaleX(0.8702);">45M</span>
<div class="abs" style="left:723px;top:582.5px;width:39.6px;height:19px;background:rgba(255,255,255,0.6)"></div>
<span class="t" id="t46" style="left:726.6px;top:583.1px;font-size:15px;line-height:18.00px;color:#666;transform:scaleX(0.8731);">250K</span>
<div class="abs" style="left:723px;top:642.5px;width:39.6px;height:19px;background:rgba(255,255,255,0.6)"></div>
<span class="t" id="t47" style="left:726.6px;top:643.1px;font-size:15px;line-height:18.00px;color:#666;transform:scaleX(0.8731);">250K</span>
<div class="abs" style="left:723px;top:702.5px;width:24.2px;height:19px;background:rgba(255,255,255,0.6)"></div>
<span class="t" id="t48" style="left:726.6px;top:703.1px;font-size:15px;line-height:18.00px;color:#666;transform:scaleX(0.8279);">4K</span>
<div class="abs" style="left:723px;top:762.5px;width:23.2px;height:19px;background:rgba(255,255,255,0.6)"></div>
<span class="t" id="t49" style="left:726.6px;top:763.1px;font-size:15px;line-height:18.00px;color:#666;transform:scaleX(0.8509);">50</span>
<div class="abs" style="left:723px;top:822.5px;width:30.6px;height:19px;background:rgba(255,255,255,0.6)"></div>
<span class="t" id="t50" style="left:726.6px;top:823.1px;font-size:15px;line-height:18.00px;color:#666;transform:scaleX(0.8629);">150</span>
<div class="abs" style="left:723px;top:882.5px;width:30.6px;height:19px;background:rgba(255,255,255,0.6)"></div>
<span class="t" id="t51" style="left:726.6px;top:883.1px;font-size:15px;line-height:18.00px;color:#666;transform:scaleX(0.8629);">150</span>
<span class="t" id="t52" style="left:359.6px;top:304.3px;font-size:21px;line-height:25.20px;color:#3c4b5d;-webkit-text-stroke:0.15px #fff;transform:scaleX(0.8568);">Thread Context Switches [3] (S)</span>
<svg class="abs" style="left:658.2px;top:305.0px;color:#111" width="27" height="27" viewBox="0 0 24 24" fill="#111"><path d="M3.5 18.49l6-6.01 4 4L22 6.92l-1.41-1.41-7.09 7.97-4-4L2 16.99z" /></svg>
<span class="t" id="t53" style="left:359.6px;top:349.2px;font-size:21px;line-height:25.20px;color:#3c4b5d;-webkit-text-stroke:0.15px #fff;transform:scaleX(0.8360);">Thread CPU time [0] (S)</span>
<svg class="abs" style="left:658.2px;top:349.1px;color:#111" width="27" height="27" viewBox="0 0 24 24" fill="#111"><path d="M3.5 18.49l6-6.01 4 4L22 6.92l-1.41-1.41-7.09 7.97-4-4L2 16.99z" /></svg>
<span class="t" id="t54" style="left:359.6px;top:409.2px;font-size:21px;line-height:25.20px;color:#3c4b5d;-webkit-text-stroke:0.15px #fff;transform:scaleX(0.8360);">Thread CPU time [3] (S)</span>
<svg class="abs" style="left:658.2px;top:409.1px;color:#111" width="27" height="27" viewBox="0 0 24 24" fill="#111"><path d="M3.5 18.49l6-6.01 4 4L22 6.92l-1.41-1.41-7.09 7.97-4-4L2 16.99z" /></svg>
<span class="t" id="t55" style="left:359.6px;top:469.2px;font-size:21px;line-height:25.20px;color:#3c4b5d;-webkit-text-stroke:0.15px #fff;transform:scaleX(0.8435);">Thread net:::enp7s0:rx:byte [0] (S)</span>
<svg class="abs" style="left:658.2px;top:469.1px;color:#111" width="27" height="27" viewBox="0 0 24 24" fill="#111"><path d="M3.5 18.49l6-6.01 4 4L22 6.92l-1.41-1.41-7.09 7.97-4-4L2 16.99z" /></svg>
<span class="t" id="t56" style="left:359.6px;top:529.2px;font-size:21px;line-height:25.20px;color:#3c4b5d;-webkit-text-stroke:0.15px #fff;transform:scaleX(0.8435);">Thread net:::enp7s0:rx:byte [3] (S)</span>
<svg class="abs" style="left:658.2px;top:529.1px;color:#111" width="27" height="27" viewBox="0 0 24 24" fill="#111"><path d="M3.5 18.49l6-6.01 4 4L22 6.92l-1.41-1.41-7.09 7.97-4-4L2 16.99z" /></svg>
<span class="t" id="t57" style="left:359.6px;top:589.2px;font-size:21px;line-height:25.20px;color:#3c4b5d;-webkit-text-stroke:0.15px #fff;transform:scaleX(0.8457);">Thread net:::enp7s0:tx:byte [0] (S)</span>
<svg class="abs" style="left:658.2px;top:589.1px;color:#111" width="27" height="27" viewBox="0 0 24 24" fill="#111"><path d="M3.5 18.49l6-6.01 4 4L22 6.92l-1.41-1.41-7.09 7.97-4-4L2 16.99z" /></svg>
<span class="t" id="t58" style="left:359.6px;top:649.2px;font-size:21px;line-height:25.20px;color:#3c4b5d;-webkit-text-stroke:0.15px #fff;transform:scaleX(0.8457);">Thread net:::enp7s0:tx:byte [3] (S)</span>
<svg class="abs" style="left:658.2px;top:649.1px;color:#111" width="27" height="27" viewBox="0 0 24 24" fill="#111"><path d="M3.5 18.49l6-6.01 4 4L22 6.92l-1.41-1.41-7.09 7.97-4-4L2 16.99z" /></svg>
<span class="t" id="t59" style="left:359.6px;top:709.2px;font-size:21px;line-height:25.20px;color:#3c4b5d;-webkit-text-stroke:0.15px #fff;transform:scaleX(0.8406);">Thread Page Faults [0] (S)</span>
<svg class="abs" style="left:658.2px;top:709.1px;color:#111" width="27" height="27" viewBox="0 0 24 24" fill="#111"><path d="M3.5 18.49l6-6.01 4 4L22 6.92l-1.41-1.41-7.09 7.97-4-4L2 16.99z" /></svg>
<span class="t" id="t60" style="left:359.6px;top:769.2px;font-size:21px;line-height:25.20px;color:#3c4b5d;-webkit-text-stroke:0.15px #fff;transform:scaleX(0.8406);">Thread Page Faults [3] (S)</span>
<svg class="abs" style="left:658.2px;top:769.1px;color:#111" width="27" height="27" viewBox="0 0 24 24" fill="#111"><path d="M3.5 18.49l6-6.01 4 4L22 6.92l-1.41-1.41-7.09 7.97-4-4L2 16.99z" /></svg>
<span class="t" id="t61" style="left:359.6px;top:829.2px;font-size:21px;line-height:25.20px;color:#3c4b5d;-webkit-text-stroke:0.15px #fff;transform:scaleX(0.8426);">Thread Peak Memory Usage [0] (S)</span>
<svg class="abs" style="left:658.2px;top:829.1px;color:#111" width="27" height="27" viewBox="0 0 24 24" fill="#111"><path d="M3.5 18.49l6-6.01 4 4L22 6.92l-1.41-1.41-7.09 7.97-4-4L2 16.99z" /></svg>
<span class="t" id="t62" style="left:359.6px;top:889.2px;font-size:21px;line-height:25.20px;color:#3c4b5d;-webkit-text-stroke:0.15px #fff;transform:scaleX(0.8426);">Thread Peak Memory Usage [3] (S)</span>
<svg class="abs" style="left:658.2px;top:889.1px;color:#111" width="27" height="27" viewBox="0 0 24 24" fill="#111"><path d="M3.5 18.49l6-6.01 4 4L22 6.92l-1.41-1.41-7.09 7.97-4-4L2 16.99z" /></svg>
<span class="t" id="t63" style="left:359.6px;top:944.3px;font-size:21px;line-height:25.20px;color:#3c4b5d;-webkit-text-stroke:0.15px #fff;transform:scaleX(0.8474);">HIP Activity Device 1, Queue 0</span>
<span class="t" id="t64" style="left:359.6px;top:982.6px;font-size:21px;line-height:25.20px;color:#3c4b5d;-webkit-text-stroke:0.15px #fff;transform:scaleX(0.8517);">Thread 0 (S) 2565106</span>
<span class="t" id="t65" style="left:1372.0px;top:984.0px;font-size:18px;line-height:21.60px;color:#e6fff4;-webkit-text-stroke:0.3px #e6fff4;transform:scaleX(0.8941);">samples [omnitrace]</span>
<div class="abs" style="left:344px;top:259px;width:1622px;height:59.7px;background:#262f3c"></div>
<svg class="abs" style="left:359.0px;top:271.5px;color:#fff" width="36" height="36" viewBox="0 0 24 24" fill="#fff"><path d="M12 8l-6 6 1.41 1.41L12 10.83l4.59 4.58L18 14z" /></svg>
<span class="t" id="t66" style="left:401.3px;top:277.4px;font-size:21px;line-height:25.20px;color:#fff;transform:scaleX(0.8898);">./prog.inst 2565106</span>
<div class="abs" style="left:344px;top:996px;width:1622px;height:505px;background:#fff"></div>
<div class="abs" style="left:344px;top:995.8px;width:1622px;height:41.2px;background:#f2f2f2;border-top:1px solid #cdcdcd;border-bottom:1px solid #cbcbcb;box-sizing:border-box;box-shadow:inset 0 -3px 3px -1px rgba(0,0,0,0.10)"></div>
<div class="abs" style="left:388.2px;top:1000.6px;width:157.6px;height:36.2px;background:#fff;border-radius:5px 5px 0 0;border:1px solid #dcdcdc;border-bottom:none;box-sizing:border-box"></div>
<div class="abs" style="left:389.2px;top:1036px;width:155.6px;height:4px;background:#fff"></div>
<svg class="abs" style="left:346.6px;top:997.6px;color:#111" width="36" height="36" viewBox="0 0 24 24" fill="#111"><path d="M12 8c1.1 0 2-.9 2-2s-.9-2-2-2-2 .9-2 2 .9 2 2 2zm0 2c-1.1 0-2 .9-2 2s.9 2 2 2 2-.9 2-2-.9-2-2-2zm0 6c-1.1 0-2 .9-2 2s.9 2 2 2 2-.9 2-2-.9-2-2-2z" /></svg>
<span class="t" id="t67" style="left:400.7px;top:1005.5px;font-size:21px;line-height:25.20px;color:#3c4b5d;transform:scaleX(0.8136);">Current Selection</span>
<svg class="abs" style="left:1893.6px;top:997.2px;color:#111" width="36" height="36" viewBox="0 0 24 24" fill="#111"><path d="M4 3.3h16v2.5H4zM10.9 8.8h2.2v12.9h-2.2z" /><path d="M7.5 12.9L12 8.4l4.5 4.5" fill="none" stroke="currentColor" stroke-width="2.3"/></svg>
<svg class="abs" style="left:1929.5px;top:996.8px;color:#111" width="36" height="36" viewBox="0 0 24 24" fill="#111"><path d="M16.59 8.59L12 13.17 7.41 8.59 6 10l6 6 6-6z" /></svg>
<span class="t" id="t68" style="left:356.6px;top:1049.6px;font-size:27px;line-height:32.40px;color:#121212;transform:scaleX(0.8588);">Counter</span>
<span class="t" id="t69" style="left:449.6px;top:1055.8px;font-size:20.5px;line-height:24.60px;color:#121212;-webkit-text-stroke:0.3px #121212;transform:scaleX(0.8797);">Thread Page Faults [3] (S)</span>
<div class="abs" style="left:344px;top:1089.4px;width:1622px;height:1.3px;background:#dadada"></div>
<div class="abs" style="left:356.2px;top:1103px;width:1600px;height:217px;border:1.3px solid #dadada;border-radius:3px;box-sizing:border-box"></div>
<span class="t" id="t70" style="left:366.2px;top:1113.5px;font-size:24px;line-height:28.80px;color:#121212;transform:scaleX(0.8959);">Properties</span>
<div class="abs" style="left:357px;top:1150.7px;width:1597px;height:1.2px;background:#e4e4e4"></div>
<span class="t" id="t71" style="left:389.9px;top:1160.6px;font-size:21px;line-height:25.20px;color:#121212;-webkit-text-stroke:0.3px #121212;transform:scaleX(0.8299);">Name</span>
<span class="t" id="t72" style="left:389.9px;top:1191.8px;font-size:21px;line-height:25.20px;color:#121212;-webkit-text-stroke:0.3px #121212;transform:scaleX(0.8625);">Start time</span>
<span class="t" id="t73" style="left:389.9px;top:1223.0px;font-size:21px;line-height:25.20px;color:#121212;-webkit-text-stroke:0.3px #121212;transform:scaleX(0.8340);">Value</span>
<span class="t" id="t74" style="left:389.9px;top:1254.2px;font-size:21px;line-height:25.20px;color:#121212;-webkit-text-stroke:0.3px #121212;transform:scaleX(0.8199);">Delta</span>
<span class="t" id="t75" style="left:389.9px;top:1285.6px;font-size:21px;line-height:25.20px;color:#121212;-webkit-text-stroke:0.3px #121212;transform:scaleX(0.8339);">Duration</span>
<span class="t" id="t76" style="left:490.3px;top:1160.6px;font-size:21px;line-height:25.20px;color:#222;transform:scaleX(0.8042);">Thread Page Faults [3] (S)</span>
<span class="t" id="t77" style="left:490.3px;top:1191.8px;font-size:21px;line-height:25.20px;color:#5d6f8e;transform:scaleX(0.8204);border-bottom:1.4px dotted #8d99ad;height:22px;">00:00:01.<span style="margin-left:3px"></span>633<span style="margin-left:3px"></span>682<span style="margin-left:3px"></span>723</span>
<span class="t" id="t78" style="left:490.3px;top:1223.0px;font-size:21px;line-height:25.20px;color:#222;transform:scaleX(0.8134);">46</span>
<span class="t" id="t79" style="left:490.3px;top:1254.2px;font-size:21px;line-height:25.20px;color:#222;transform:scaleX(0.8134);">12</span>
<span class="t" id="t80" style="left:490.3px;top:1285.6px;font-size:21px;line-height:25.20px;color:#5d6f8e;transform:scaleX(0.8308);border-bottom:1.4px dotted #8d99ad;height:22px;">1s 387ms 3us 804ns</span>
<div class="abs" style="left:0;top:1498.6px;width:1966px;height:2.4px;background:#5b5b5e"></div>
</body></html>
